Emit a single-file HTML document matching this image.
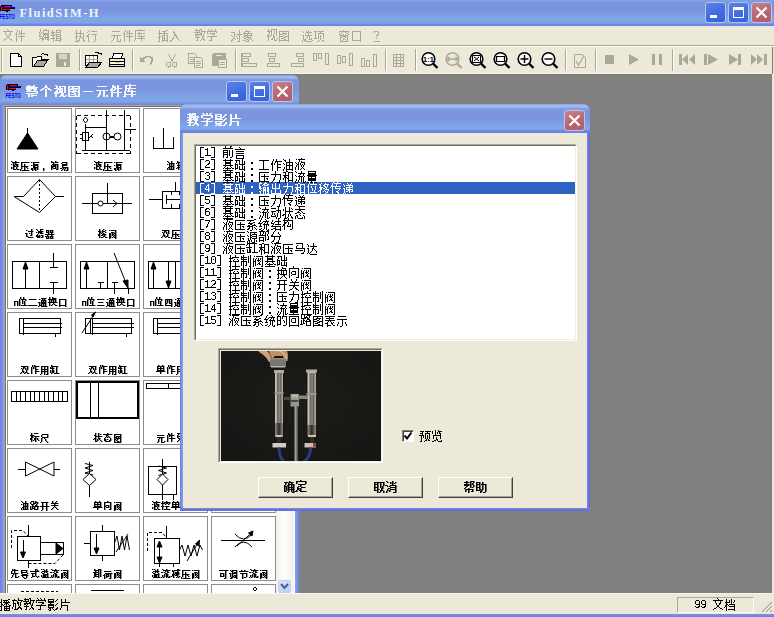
<!DOCTYPE html>
<html><head><meta charset="utf-8">
<style>
*{margin:0;padding:0;box-sizing:border-box}
html,body{width:774px;height:617px;overflow:hidden;background:#808080;font-family:"Liberation Sans",sans-serif;font-size:12px;color:#000}
.a{position:absolute}
svg{position:absolute;left:0;top:0;overflow:visible}
.cap{position:absolute;color:#fff;font-weight:bold;white-space:nowrap}
.menu{position:absolute;color:#aca899;font-size:12px;line-height:12px;white-space:nowrap}
.lbl{position:absolute;font-size:10px;line-height:10px;white-space:nowrap;text-align:center;width:64px}
.li{position:absolute;left:199px;font-size:12px;line-height:12px;white-space:nowrap}
.btn{position:absolute;width:75px;height:21px;background:#ece9d8;border:1px solid;border-color:#fff #404040 #404040 #fff;box-shadow:inset -1px -1px 0 #aca899;text-align:center;font-size:12px;line-height:18px}
</style></head><body>
<svg width="0" height="0" style="position:absolute;left:0;top:0"><defs><path id="r12_6587" d="M5 0h1v1h-1zM6 1h1v1h-1zM1 2h10v1h-10zM3 3h1v1h-1zM8 3h1v1h-1zM3 4h1v1h-1zM8 4h1v1h-1zM4 5h1v1h-1zM7 5h2v1h-2zM4 6h1v1h-1zM7 6h1v1h-1zM5 7h2v1h-2zM5 8h2v1h-2zM4 9h1v1h-1zM7 9h1v1h-1zM2 10h2v1h-2zM8 10h2v1h-2zM1 11h1v1h-1zM10 11h1v1h-1z"/><path id="r12_4ef6" d="M3 1h1v1h-1zM7 1h1v1h-1zM3 2h1v1h-1zM5 2h1v1h-1zM7 2h1v1h-1zM2 3h1v1h-1zM5 3h1v1h-1zM7 3h1v1h-1zM2 4h1v1h-1zM5 4h6v1h-6zM1 5h2v1h-2zM4 5h1v1h-1zM7 5h1v1h-1zM2 6h1v1h-1zM7 6h1v1h-1zM2 7h1v1h-1zM4 7h7v1h-7zM2 8h1v1h-1zM7 8h1v1h-1zM2 9h1v1h-1zM7 9h1v1h-1zM2 10h1v1h-1zM7 10h1v1h-1zM2 11h1v1h-1zM7 11h1v1h-1zM2 12h1v1h-1zM7 12h1v1h-1z"/><path id="r12_7f16" d="M2 0h1v1h-1zM7 0h1v1h-1zM2 1h1v1h-1zM5 1h6v1h-6zM2 2h1v1h-1zM5 2h1v1h-1zM10 2h1v1h-1zM1 3h1v1h-1zM3 3h1v1h-1zM5 3h1v1h-1zM10 3h1v1h-1zM1 4h1v1h-1zM3 4h1v1h-1zM5 4h6v1h-6zM2 5h1v1h-1zM5 5h6v1h-6zM1 6h1v1h-1zM5 6h1v1h-1zM7 6h1v1h-1zM9 6h2v1h-2zM1 7h3v1h-3zM5 7h1v1h-1zM7 7h1v1h-1zM9 7h2v1h-2zM4 8h1v1h-1zM6 8h5v1h-5zM2 9h4v1h-4zM7 9h1v1h-1zM9 9h2v1h-2zM1 10h1v1h-1zM4 10h2v1h-2zM7 10h1v1h-1zM9 10h2v1h-2zM4 11h1v1h-1zM10 11h1v1h-1z"/><path id="r12_8f91" d="M2 1h1v1h-1zM6 1h5v1h-5zM2 2h1v1h-1zM6 2h1v1h-1zM10 2h1v1h-1zM1 3h4v1h-4zM6 3h5v1h-5zM2 4h2v1h-2zM1 5h1v1h-1zM3 5h1v1h-1zM5 5h6v1h-6zM1 6h4v1h-4zM6 6h1v1h-1zM10 6h1v1h-1zM3 7h1v1h-1zM6 7h5v1h-5zM3 8h1v1h-1zM6 8h1v1h-1zM10 8h1v1h-1zM0 9h5v1h-5zM6 9h5v1h-5zM3 10h1v1h-1zM6 10h1v1h-1zM10 10h2v1h-2zM3 11h1v1h-1zM5 11h6v1h-6zM3 12h1v1h-1zM10 12h1v1h-1z"/><path id="r12_6267" d="M2 1h1v1h-1zM6 1h1v1h-1zM2 2h1v1h-1zM6 2h1v1h-1zM2 3h1v1h-1zM6 3h1v1h-1zM1 4h9v1h-9zM2 5h1v1h-1zM6 5h1v1h-1zM9 5h1v1h-1zM2 6h1v1h-1zM6 6h1v1h-1zM9 6h1v1h-1zM2 7h2v1h-2zM5 7h2v1h-2zM9 7h1v1h-1zM1 8h2v1h-2zM6 8h2v1h-2zM9 8h1v1h-1zM2 9h1v1h-1zM5 9h1v1h-1zM8 9h2v1h-2zM2 10h1v1h-1zM5 10h1v1h-1zM9 10h1v1h-1zM2 11h1v1h-1zM4 11h2v1h-2zM9 11h2v1h-2zM1 12h4v1h-4zM10 12h1v1h-1z"/><path id="r12_884c" d="M3 1h1v1h-1zM2 2h1v1h-1zM5 2h6v1h-6zM1 3h1v1h-1zM3 4h1v1h-1zM2 5h1v1h-1zM5 5h6v1h-6zM1 6h2v1h-2zM9 6h1v1h-1zM0 7h3v1h-3zM9 7h1v1h-1zM2 8h1v1h-1zM9 8h1v1h-1zM2 9h1v1h-1zM9 9h1v1h-1zM2 10h1v1h-1zM9 10h1v1h-1zM2 11h1v1h-1zM9 11h1v1h-1zM2 12h1v1h-1zM7 12h2v1h-2z"/><path id="r12_5143" d="M2 2h8v1h-8zM1 6h10v1h-10zM4 7h1v1h-1zM7 7h1v1h-1zM4 8h1v1h-1zM7 8h1v1h-1zM3 9h1v1h-1zM7 9h1v1h-1zM3 10h1v1h-1zM7 10h1v1h-1zM10 10h1v1h-1zM2 11h1v1h-1zM7 11h1v1h-1zM10 11h1v1h-1zM1 12h1v1h-1zM7 12h4v1h-4z"/><path id="r12_5e93" d="M6 0h1v1h-1zM1 1h10v1h-10zM1 2h1v1h-1zM1 3h1v1h-1zM5 3h1v1h-1zM1 4h1v1h-1zM3 4h8v1h-8zM1 5h1v1h-1zM5 5h1v1h-1zM1 6h1v1h-1zM4 6h1v1h-1zM7 6h1v1h-1zM1 7h1v1h-1zM4 7h7v1h-7zM1 8h1v1h-1zM7 8h1v1h-1zM1 9h1v1h-1zM3 9h8v1h-8zM1 10h1v1h-1zM7 10h1v1h-1zM0 11h1v1h-1zM7 11h1v1h-1z"/><path id="r12_63d2" d="M2 1h1v1h-1zM9 1h2v1h-2zM2 2h1v1h-1zM5 2h4v1h-4zM2 3h1v1h-1zM7 3h1v1h-1zM1 4h10v1h-10zM2 5h1v1h-1zM7 5h1v1h-1zM2 6h1v1h-1zM5 6h3v1h-3zM9 6h2v1h-2zM2 7h2v1h-2zM5 7h1v1h-1zM7 7h1v1h-1zM10 7h1v1h-1zM1 8h2v1h-2zM5 8h1v1h-1zM7 8h1v1h-1zM10 8h1v1h-1zM2 9h1v1h-1zM5 9h3v1h-3zM9 9h2v1h-2zM2 10h1v1h-1zM5 10h1v1h-1zM7 10h1v1h-1zM10 10h1v1h-1zM2 11h1v1h-1zM5 11h6v1h-6zM1 12h2v1h-2zM5 12h1v1h-1zM10 12h1v1h-1z"/><path id="r12_5165" d="M4 2h1v1h-1zM4 3h2v1h-2zM5 4h1v1h-1zM5 5h2v1h-2zM5 6h3v1h-3zM5 7h1v1h-1zM7 7h1v1h-1zM4 8h1v1h-1zM7 8h2v1h-2zM3 9h2v1h-2zM8 9h1v1h-1zM3 10h1v1h-1zM9 10h1v1h-1zM1 11h2v1h-2zM10 11h1v1h-1zM1 12h1v1h-1z"/><path id="r12_6559" d="M2 0h1v1h-1zM6 0h2v1h-2zM1 1h5v1h-5zM7 1h1v1h-1zM2 2h1v1h-1zM5 2h1v1h-1zM7 2h5v1h-5zM0 3h6v1h-6zM7 3h1v1h-1zM10 3h1v1h-1zM3 4h1v1h-1zM6 4h2v1h-2zM10 4h1v1h-1zM1 5h7v1h-7zM9 5h1v1h-1zM1 6h2v1h-2zM4 6h1v1h-1zM7 6h1v1h-1zM9 6h1v1h-1zM3 7h1v1h-1zM8 7h2v1h-2zM1 8h5v1h-5zM8 8h1v1h-1zM3 9h1v1h-1zM8 9h2v1h-2zM3 10h1v1h-1zM7 10h1v1h-1zM9 10h2v1h-2zM2 11h2v1h-2zM6 11h1v1h-1zM10 11h1v1h-1z"/><path id="r12_5b66" d="M2 0h1v1h-1zM5 0h1v1h-1zM9 0h1v1h-1zM3 1h1v1h-1zM6 1h1v1h-1zM9 1h1v1h-1zM1 2h10v1h-10zM1 3h1v1h-1zM10 3h1v1h-1zM1 4h1v1h-1zM3 4h6v1h-6zM7 5h2v1h-2zM6 6h1v1h-1zM1 7h10v1h-10zM5 8h1v1h-1zM5 9h1v1h-1zM5 10h1v1h-1zM3 11h3v1h-3z"/><path id="r12_5bf9" d="M9 1h1v1h-1zM9 2h1v1h-1zM1 3h4v1h-4zM9 3h1v1h-1zM4 4h1v1h-1zM9 4h1v1h-1zM4 5h1v1h-1zM6 5h6v1h-6zM1 6h1v1h-1zM4 6h1v1h-1zM9 6h1v1h-1zM2 7h1v1h-1zM4 7h1v1h-1zM6 7h1v1h-1zM9 7h1v1h-1zM3 8h1v1h-1zM7 8h1v1h-1zM9 8h1v1h-1zM3 9h2v1h-2zM7 9h1v1h-1zM9 9h1v1h-1zM2 10h1v1h-1zM5 10h1v1h-1zM9 10h1v1h-1zM1 11h2v1h-2zM9 11h1v1h-1zM1 12h1v1h-1zM7 12h3v1h-3z"/><path id="r12_8c61" d="M4 1h1v1h-1zM3 2h5v1h-5zM2 3h1v1h-1zM6 3h1v1h-1zM1 4h9v1h-9zM2 5h1v1h-1zM5 5h1v1h-1zM9 5h1v1h-1zM2 6h8v1h-8zM2 7h2v1h-2zM5 7h1v1h-1zM9 7h1v1h-1zM1 8h1v1h-1zM4 8h5v1h-5zM2 9h2v1h-2zM6 9h1v1h-1zM8 9h1v1h-1zM4 10h2v1h-2zM7 10h1v1h-1zM9 10h1v1h-1zM1 11h3v1h-3zM6 11h1v1h-1zM10 11h1v1h-1zM4 12h3v1h-3z"/><path id="r12_89c6" d="M2 0h1v1h-1zM5 0h6v1h-6zM2 1h1v1h-1zM5 1h1v1h-1zM10 1h1v1h-1zM1 2h5v1h-5zM8 2h1v1h-1zM10 2h1v1h-1zM3 3h1v1h-1zM5 3h1v1h-1zM8 3h1v1h-1zM10 3h1v1h-1zM3 4h1v1h-1zM5 4h1v1h-1zM8 4h1v1h-1zM10 4h1v1h-1zM2 5h1v1h-1zM5 5h1v1h-1zM7 5h1v1h-1zM10 5h1v1h-1zM1 6h3v1h-3zM5 6h1v1h-1zM7 6h1v1h-1zM10 6h1v1h-1zM1 7h2v1h-2zM4 7h1v1h-1zM7 7h2v1h-2zM2 8h1v1h-1zM7 8h2v1h-2zM2 9h1v1h-1zM6 9h1v1h-1zM8 9h1v1h-1zM11 9h1v1h-1zM2 10h1v1h-1zM5 10h2v1h-2zM8 10h1v1h-1zM10 10h1v1h-1zM2 11h1v1h-1zM8 11h3v1h-3z"/><path id="r12_56fe" d="M1 2h10v1h-10zM1 3h1v1h-1zM5 3h1v1h-1zM10 3h1v1h-1zM1 4h1v1h-1zM4 4h5v1h-5zM10 4h1v1h-1zM1 5h4v1h-4zM7 5h1v1h-1zM10 5h1v1h-1zM1 6h1v1h-1zM5 6h2v1h-2zM10 6h1v1h-1zM1 7h4v1h-4zM7 7h4v1h-4zM1 8h1v1h-1zM5 8h3v1h-3zM10 8h1v1h-1zM1 9h1v1h-1zM3 9h3v1h-3zM10 9h1v1h-1zM1 10h1v1h-1zM6 10h2v1h-2zM10 10h1v1h-1zM1 11h10v1h-10zM1 12h1v1h-1zM10 12h1v1h-1z"/><path id="r12_9009" d="M7 1h1v1h-1zM1 2h1v1h-1zM5 2h1v1h-1zM7 2h1v1h-1zM2 3h1v1h-1zM5 3h6v1h-6zM4 4h1v1h-1zM7 4h1v1h-1zM7 5h1v1h-1zM1 6h2v1h-2zM4 6h7v1h-7zM2 7h1v1h-1zM6 7h1v1h-1zM8 7h1v1h-1zM2 8h1v1h-1zM6 8h1v1h-1zM8 8h1v1h-1zM2 9h1v1h-1zM5 9h1v1h-1zM8 9h1v1h-1zM10 9h1v1h-1zM2 10h3v1h-3zM8 10h3v1h-3zM1 11h1v1h-1zM3 11h2v1h-2zM11 11h1v1h-1zM1 12h1v1h-1zM4 12h7v1h-7z"/><path id="r12_9879" d="M1 2h3v1h-3zM5 2h6v1h-6zM2 3h1v1h-1zM7 3h1v1h-1zM2 4h1v1h-1zM5 4h6v1h-6zM2 5h1v1h-1zM5 5h1v1h-1zM10 5h1v1h-1zM2 6h1v1h-1zM5 6h1v1h-1zM7 6h1v1h-1zM10 6h1v1h-1zM2 7h1v1h-1zM5 7h1v1h-1zM7 7h1v1h-1zM10 7h1v1h-1zM2 8h1v1h-1zM5 8h1v1h-1zM7 8h1v1h-1zM10 8h1v1h-1zM1 9h3v1h-3zM5 9h1v1h-1zM7 9h1v1h-1zM10 9h1v1h-1zM7 10h1v1h-1zM6 11h1v1h-1zM9 11h2v1h-2zM4 12h2v1h-2zM10 12h1v1h-1z"/><path id="r12_7a97" d="M5 1h1v1h-1zM1 2h10v1h-10zM1 3h1v1h-1zM4 3h1v1h-1zM7 3h1v1h-1zM10 3h1v1h-1zM3 4h1v1h-1zM8 4h2v1h-2zM1 5h2v1h-2zM5 5h1v1h-1zM10 5h1v1h-1zM2 6h8v1h-8zM2 7h1v1h-1zM4 7h4v1h-4zM9 7h1v1h-1zM2 8h2v1h-2zM7 8h1v1h-1zM9 8h1v1h-1zM2 9h1v1h-1zM5 9h2v1h-2zM9 9h1v1h-1zM2 10h1v1h-1zM5 10h1v1h-1zM7 10h1v1h-1zM9 10h1v1h-1zM2 11h1v1h-1zM4 11h1v1h-1zM9 11h1v1h-1zM2 12h8v1h-8z"/><path id="r12_53e3" d="M2 2h9v1h-9zM2 3h1v1h-1zM10 3h1v1h-1zM2 4h1v1h-1zM10 4h1v1h-1zM2 5h1v1h-1zM10 5h1v1h-1zM2 6h1v1h-1zM10 6h1v1h-1zM2 7h1v1h-1zM10 7h1v1h-1zM2 8h1v1h-1zM10 8h1v1h-1zM2 9h1v1h-1zM10 9h1v1h-1zM2 10h1v1h-1zM10 10h1v1h-1zM2 11h9v1h-9zM10 12h1v1h-1z"/><path id="r12_3f" d="M1 2h4v1h-4zM1 3h1v1h-1zM5 3h1v1h-1zM5 4h1v1h-1zM4 5h2v1h-2zM3 6h2v1h-2zM3 7h1v1h-1zM3 9h1v1h-1z"/><path id="b13_6574" d="M3 3h2v1h-2zM8 3h2v1h-2zM1 4h9v1h-9zM1 5h12v1h-12zM1 6h11v1h-11zM1 7h6v1h-6zM8 7h4v1h-4zM2 8h4v1h-4zM9 8h2v1h-2zM1 9h12v1h-12zM11 10h2v1h-2zM1 11h12v1h-12zM3 12h2v1h-2zM6 12h2v1h-2zM3 13h2v1h-2zM6 13h6v1h-6zM3 14h2v1h-2zM6 14h2v1h-2z"/><path id="b13_4e2a" d="M6 3h2v1h-2zM6 4h2v1h-2zM5 5h4v1h-4zM3 6h3v1h-3zM8 6h3v1h-3zM2 7h3v1h-3zM6 7h2v1h-2zM9 7h3v1h-3zM1 8h2v1h-2zM6 8h2v1h-2zM11 8h2v1h-2zM6 9h2v1h-2zM6 10h2v1h-2zM6 11h2v1h-2zM6 12h2v1h-2zM6 13h2v1h-2zM6 14h2v1h-2z"/><path id="b13_89c6" d="M2 3h2v1h-2zM3 4h2v1h-2zM6 4h7v1h-7zM3 5h2v1h-2zM6 5h2v1h-2zM11 5h2v1h-2zM1 6h9v1h-9zM11 6h2v1h-2zM4 7h6v1h-6zM11 7h2v1h-2zM3 8h2v1h-2zM6 8h4v1h-4zM11 8h2v1h-2zM2 9h3v1h-3zM6 9h4v1h-4zM11 9h2v1h-2zM1 10h9v1h-9zM11 10h2v1h-2zM1 11h5v1h-5zM8 11h3v1h-3zM2 12h2v1h-2zM8 12h3v1h-3zM2 13h2v1h-2zM7 13h4v1h-4zM12 13h2v1h-2zM2 14h2v1h-2zM6 14h2v1h-2zM9 14h4v1h-4z"/><path id="b13_56fe" d="M1 4h12v1h-12zM1 5h2v1h-2zM5 5h2v1h-2zM11 5h2v1h-2zM1 6h2v1h-2zM4 6h9v1h-9zM1 7h6v1h-6zM8 7h2v1h-2zM11 7h2v1h-2zM1 8h2v1h-2zM6 8h3v1h-3zM11 8h2v1h-2zM1 9h12v1h-12zM1 10h2v1h-2zM5 10h3v1h-3zM11 10h2v1h-2zM1 11h2v1h-2zM7 11h2v1h-2zM11 11h2v1h-2zM1 12h2v1h-2zM4 12h5v1h-5zM11 12h2v1h-2zM1 13h2v1h-2zM8 13h2v1h-2zM11 13h2v1h-2zM1 14h12v1h-12z"/><path id="b13_ff0d" d="M2 9h10v1h-10z"/><path id="b13_5143" d="M2 4h10v1h-10zM1 8h12v1h-12zM4 9h2v1h-2zM8 9h2v1h-2zM4 10h2v1h-2zM8 10h2v1h-2zM4 11h2v1h-2zM8 11h2v1h-2zM3 12h3v1h-3zM8 12h2v1h-2zM3 13h2v1h-2zM8 13h2v1h-2zM11 13h2v1h-2zM2 14h2v1h-2zM8 14h2v1h-2zM11 14h2v1h-2z"/><path id="b13_4ef6" d="M3 3h2v1h-2zM8 3h2v1h-2zM3 4h4v1h-4zM8 4h2v1h-2zM3 5h4v1h-4zM8 5h2v1h-2zM2 6h2v1h-2zM5 6h8v1h-8zM1 7h3v1h-3zM5 7h2v1h-2zM8 7h2v1h-2zM1 8h5v1h-5zM8 8h2v1h-2zM2 9h2v1h-2zM8 9h2v1h-2zM2 10h11v1h-11zM2 11h2v1h-2zM8 11h2v1h-2zM2 12h2v1h-2zM8 12h2v1h-2zM2 13h2v1h-2zM8 13h2v1h-2zM2 14h2v1h-2zM8 14h2v1h-2z"/><path id="b13_5e93" d="M6 2h2v1h-2zM2 3h11v1h-11zM2 4h2v1h-2zM6 4h2v1h-2zM2 5h2v1h-2zM6 5h2v1h-2zM2 6h11v1h-11zM2 7h2v1h-2zM5 7h2v1h-2zM2 8h2v1h-2zM5 8h2v1h-2zM8 8h2v1h-2zM1 9h2v1h-2zM4 9h9v1h-9zM1 10h2v1h-2zM8 10h2v1h-2zM1 11h2v1h-2zM8 11h2v1h-2zM1 12h12v1h-12zM1 13h2v1h-2zM8 13h2v1h-2zM0 14h3v1h-3zM8 14h2v1h-2z"/><path id="s9_6db2" d="M1 1h1v1h-1zM5 1h1v1h-1zM2 2h7v1h-7zM3 3h1v1h-1zM5 3h1v1h-1zM1 4h1v1h-1zM3 4h1v1h-1zM5 4h3v1h-3zM3 5h2v1h-2zM6 5h2v1h-2zM3 6h3v1h-3zM7 6h1v1h-1zM1 7h1v1h-1zM3 7h1v1h-1zM6 7h1v1h-1zM1 8h1v1h-1zM3 8h1v1h-1zM6 8h1v1h-1zM3 9h3v1h-3zM7 9h2v1h-2z"/><path id="s9_538b" d="M1 2h8v1h-8zM1 3h1v1h-1zM1 4h1v1h-1zM4 4h1v1h-1zM1 5h1v1h-1zM4 5h1v1h-1zM1 6h7v1h-7zM1 7h1v1h-1zM4 7h1v1h-1zM6 7h1v1h-1zM1 8h1v1h-1zM4 8h1v1h-1zM7 8h1v1h-1zM0 9h1v1h-1zM4 9h1v1h-1zM0 10h1v1h-1zM2 10h7v1h-7z"/><path id="s9_6e90" d="M1 2h1v1h-1zM3 2h6v1h-6zM3 3h1v1h-1zM3 4h5v1h-5zM1 5h1v1h-1zM3 5h5v1h-5zM3 6h2v1h-2zM7 6h1v1h-1zM3 7h5v1h-5zM1 8h2v1h-2zM4 8h2v1h-2zM7 8h1v1h-1zM1 9h2v1h-2zM4 9h2v1h-2zM7 9h1v1h-1zM2 10h1v1h-1zM5 10h1v1h-1z"/><path id="s9_ff0c" d="M3 8h1v1h-1zM3 9h1v1h-1zM3 10h1v1h-1z"/><path id="s9_7b80" d="M1 1h1v1h-1zM5 1h1v1h-1zM1 2h3v1h-3zM5 2h3v1h-3zM3 3h1v1h-1zM2 4h6v1h-6zM1 5h1v1h-1zM3 5h3v1h-3zM7 5h1v1h-1zM1 6h5v1h-5zM7 6h1v1h-1zM1 7h2v1h-2zM5 7h1v1h-1zM7 7h1v1h-1zM1 8h1v1h-1zM3 8h3v1h-3zM7 8h1v1h-1zM1 9h1v1h-1zM6 9h2v1h-2z"/><path id="s9_6613" d="M2 2h5v1h-5zM1 3h1v1h-1zM6 3h1v1h-1zM2 4h5v1h-5zM2 5h5v1h-5zM2 6h1v1h-1zM2 7h6v1h-6zM0 8h2v1h-2zM3 8h1v1h-1zM5 8h1v1h-1zM7 8h1v1h-1zM2 9h1v1h-1zM4 9h1v1h-1zM7 9h1v1h-1zM1 10h1v1h-1zM4 10h1v1h-1zM6 10h2v1h-2z"/><path id="s9_6cb9" d="M1 1h1v1h-1zM5 1h1v1h-1zM2 2h1v1h-1zM5 2h1v1h-1zM3 3h5v1h-5zM1 4h1v1h-1zM3 4h1v1h-1zM5 4h1v1h-1zM7 4h1v1h-1zM3 5h1v1h-1zM5 5h1v1h-1zM7 5h1v1h-1zM3 6h5v1h-5zM2 7h2v1h-2zM5 7h1v1h-1zM7 7h1v1h-1zM1 8h1v1h-1zM3 8h1v1h-1zM5 8h1v1h-1zM7 8h1v1h-1zM1 9h1v1h-1zM3 9h5v1h-5z"/><path id="s9_7bb1" d="M1 1h1v1h-1zM5 1h1v1h-1zM1 2h3v1h-3zM5 2h4v1h-4zM0 3h1v1h-1zM2 3h1v1h-1zM4 3h1v1h-1zM6 3h1v1h-1zM2 4h1v1h-1zM4 4h4v1h-4zM1 5h4v1h-4zM7 5h1v1h-1zM2 6h1v1h-1zM4 6h4v1h-4zM1 7h7v1h-7zM0 8h1v1h-1zM2 8h1v1h-1zM4 8h1v1h-1zM7 8h1v1h-1zM2 9h1v1h-1zM4 9h4v1h-4z"/><path id="s9_8fc7" d="M6 1h1v1h-1zM1 2h1v1h-1zM6 2h1v1h-1zM3 3h5v1h-5zM6 4h1v1h-1zM0 5h2v1h-2zM4 5h1v1h-1zM6 5h1v1h-1zM1 6h1v1h-1zM6 6h1v1h-1zM1 7h1v1h-1zM5 7h2v1h-2zM1 8h2v1h-2zM3 9h5v1h-5z"/><path id="s9_6ee4" d="M1 1h1v1h-1zM5 1h3v1h-3zM2 2h1v1h-1zM5 2h1v1h-1zM3 3h5v1h-5zM1 4h1v1h-1zM3 4h4v1h-4zM3 5h1v1h-1zM5 5h3v1h-3zM2 6h1v1h-1zM1 7h2v1h-2zM4 7h1v1h-1zM6 7h2v1h-2zM1 8h4v1h-4zM7 8h1v1h-1zM2 9h3v1h-3zM6 9h2v1h-2z"/><path id="s9_5668" d="M1 2h3v1h-3zM5 2h3v1h-3zM1 3h1v1h-1zM3 3h1v1h-1zM5 3h1v1h-1zM7 3h1v1h-1zM1 4h3v1h-3zM5 4h3v1h-3zM3 5h1v1h-1zM6 5h1v1h-1zM0 6h9v1h-9zM2 7h1v1h-1zM6 7h1v1h-1zM0 8h4v1h-4zM5 8h3v1h-3zM1 9h1v1h-1zM3 9h1v1h-1zM5 9h1v1h-1zM7 9h1v1h-1zM1 10h3v1h-3zM5 10h3v1h-3z"/><path id="s9_68ad" d="M1 1h1v1h-1zM5 1h1v1h-1zM1 2h1v1h-1zM4 2h1v1h-1zM7 2h1v1h-1zM0 3h3v1h-3zM4 3h3v1h-3zM1 4h2v1h-2zM4 4h1v1h-1zM7 4h1v1h-1zM1 5h1v1h-1zM3 5h1v1h-1zM5 5h1v1h-1zM0 6h2v1h-2zM4 6h4v1h-4zM0 7h2v1h-2zM3 7h2v1h-2zM6 7h1v1h-1zM1 8h1v1h-1zM5 8h2v1h-2zM1 9h1v1h-1zM3 9h2v1h-2zM7 9h2v1h-2z"/><path id="s9_9600" d="M1 2h1v1h-1zM3 2h5v1h-5zM7 3h1v1h-1zM3 4h3v1h-3zM7 4h1v1h-1zM1 5h2v1h-2zM4 5h1v1h-1zM6 5h2v1h-2zM1 6h2v1h-2zM4 6h2v1h-2zM7 6h1v1h-1zM1 7h2v1h-2zM4 7h1v1h-1zM6 7h2v1h-2zM1 8h2v1h-2zM5 8h1v1h-1zM7 8h1v1h-1zM1 9h2v1h-2zM4 9h1v1h-1zM6 9h2v1h-2zM1 10h1v1h-1zM7 10h1v1h-1z"/><path id="s9_53cc" d="M1 2h7v1h-7zM3 3h2v1h-2zM7 3h1v1h-1zM1 4h1v1h-1zM3 4h1v1h-1zM5 4h1v1h-1zM7 4h1v1h-1zM2 5h1v1h-1zM5 5h1v1h-1zM7 5h1v1h-1zM2 6h1v1h-1zM6 6h1v1h-1zM2 7h2v1h-2zM6 7h1v1h-1zM1 8h1v1h-1zM3 8h1v1h-1zM5 8h2v1h-2zM0 9h1v1h-1zM4 9h1v1h-1zM7 9h2v1h-2z"/><path id="s9_6e" d="M1 5h4v1h-4zM1 6h1v1h-1zM4 6h1v1h-1zM1 7h1v1h-1zM4 7h1v1h-1zM1 8h1v1h-1zM4 8h1v1h-1zM1 9h1v1h-1zM4 9h1v1h-1z"/><path id="s9_4f4d" d="M2 1h1v1h-1zM5 1h1v1h-1zM2 2h1v1h-1zM5 2h1v1h-1zM1 3h1v1h-1zM3 3h5v1h-5zM1 4h1v1h-1zM4 4h1v1h-1zM7 4h1v1h-1zM1 5h1v1h-1zM4 5h1v1h-1zM6 5h1v1h-1zM1 6h1v1h-1zM4 6h1v1h-1zM6 6h1v1h-1zM1 7h1v1h-1zM4 7h1v1h-1zM6 7h1v1h-1zM1 8h1v1h-1zM6 8h1v1h-1zM1 9h1v1h-1zM3 9h6v1h-6z"/><path id="s9_4e8c" d="M1 3h7v1h-7zM0 9h9v1h-9z"/><path id="s9_901a" d="M3 2h5v1h-5zM1 3h1v1h-1zM4 3h1v1h-1zM6 3h1v1h-1zM3 4h5v1h-5zM3 5h1v1h-1zM5 5h1v1h-1zM7 5h1v1h-1zM0 6h2v1h-2zM3 6h5v1h-5zM1 7h1v1h-1zM3 7h5v1h-5zM1 8h1v1h-1zM3 8h1v1h-1zM5 8h1v1h-1zM7 8h1v1h-1zM1 9h3v1h-3zM5 9h1v1h-1zM7 9h1v1h-1zM0 10h1v1h-1zM3 10h6v1h-6z"/><path id="s9_6362" d="M1 1h1v1h-1zM4 1h1v1h-1zM1 2h1v1h-1zM4 2h4v1h-4zM0 3h8v1h-8zM1 4h1v1h-1zM3 4h1v1h-1zM5 4h1v1h-1zM7 4h1v1h-1zM1 5h1v1h-1zM3 5h1v1h-1zM5 5h1v1h-1zM7 5h1v1h-1zM0 6h9v1h-9zM1 7h1v1h-1zM5 7h1v1h-1zM1 8h1v1h-1zM4 8h1v1h-1zM6 8h1v1h-1zM1 9h1v1h-1zM3 9h1v1h-1zM7 9h2v1h-2z"/><path id="s9_53e3" d="M1 3h7v1h-7zM1 4h1v1h-1zM7 4h1v1h-1zM1 5h1v1h-1zM7 5h1v1h-1zM1 6h1v1h-1zM7 6h1v1h-1zM1 7h1v1h-1zM7 7h1v1h-1zM1 8h1v1h-1zM7 8h1v1h-1zM1 9h7v1h-7zM1 10h1v1h-1zM7 10h1v1h-1z"/><path id="s9_4e09" d="M1 3h7v1h-7zM2 6h5v1h-5zM1 9h7v1h-7z"/><path id="s9_56db" d="M1 3h7v1h-7zM1 4h1v1h-1zM3 4h1v1h-1zM5 4h1v1h-1zM7 4h1v1h-1zM1 5h1v1h-1zM3 5h1v1h-1zM5 5h1v1h-1zM7 5h1v1h-1zM1 6h1v1h-1zM3 6h1v1h-1zM5 6h1v1h-1zM7 6h1v1h-1zM1 7h2v1h-2zM5 7h3v1h-3zM1 8h1v1h-1zM7 8h1v1h-1zM1 9h7v1h-7zM7 10h1v1h-1z"/><path id="s9_4f5c" d="M2 1h1v1h-1zM4 1h1v1h-1zM2 2h1v1h-1zM4 2h5v1h-5zM1 3h1v1h-1zM3 3h1v1h-1zM5 3h1v1h-1zM1 4h1v1h-1zM3 4h1v1h-1zM5 4h1v1h-1zM1 5h1v1h-1zM5 5h3v1h-3zM1 6h1v1h-1zM5 6h1v1h-1zM1 7h1v1h-1zM5 7h4v1h-4zM1 8h1v1h-1zM5 8h1v1h-1zM1 9h1v1h-1zM5 9h1v1h-1z"/><path id="s9_7528" d="M1 2h7v1h-7zM1 3h1v1h-1zM4 3h1v1h-1zM7 3h1v1h-1zM1 4h1v1h-1zM4 4h1v1h-1zM7 4h1v1h-1zM1 5h7v1h-7zM1 6h1v1h-1zM4 6h1v1h-1zM7 6h1v1h-1zM1 7h7v1h-7zM1 8h1v1h-1zM4 8h1v1h-1zM7 8h1v1h-1zM1 9h1v1h-1zM4 9h1v1h-1zM7 9h1v1h-1zM0 10h1v1h-1zM4 10h1v1h-1zM6 10h2v1h-2z"/><path id="s9_7f38" d="M1 1h1v1h-1zM1 2h7v1h-7zM0 3h1v1h-1zM2 3h1v1h-1zM6 3h1v1h-1zM0 4h4v1h-4zM6 4h1v1h-1zM2 5h1v1h-1zM6 5h1v1h-1zM0 6h1v1h-1zM2 6h2v1h-2zM6 6h1v1h-1zM0 7h1v1h-1zM2 7h2v1h-2zM6 7h1v1h-1zM0 8h1v1h-1zM2 8h2v1h-2zM6 8h1v1h-1zM1 9h1v1h-1zM4 9h5v1h-5z"/><path id="s9_5355" d="M2 1h1v1h-1zM6 1h1v1h-1zM1 2h7v1h-7zM1 3h1v1h-1zM4 3h1v1h-1zM7 3h1v1h-1zM1 4h7v1h-7zM1 5h1v1h-1zM4 5h1v1h-1zM7 5h1v1h-1zM1 6h7v1h-7zM0 7h9v1h-9zM4 8h1v1h-1zM4 9h1v1h-1z"/><path id="s9_6807" d="M1 1h1v1h-1zM4 1h4v1h-4zM1 2h1v1h-1zM0 3h4v1h-4zM1 4h2v1h-2zM4 4h5v1h-5zM1 5h2v1h-2zM5 5h1v1h-1zM0 6h2v1h-2zM4 6h2v1h-2zM7 6h1v1h-1zM0 7h2v1h-2zM4 7h2v1h-2zM7 7h1v1h-1zM1 8h1v1h-1zM3 8h1v1h-1zM5 8h1v1h-1zM8 8h1v1h-1zM1 9h1v1h-1zM5 9h1v1h-1z"/><path id="s9_5c3a" d="M2 2h6v1h-6zM1 3h1v1h-1zM7 3h1v1h-1zM1 4h1v1h-1zM7 4h1v1h-1zM2 5h6v1h-6zM1 6h1v1h-1zM4 6h1v1h-1zM1 7h1v1h-1zM5 7h1v1h-1zM1 8h1v1h-1zM5 8h1v1h-1zM1 9h1v1h-1zM6 9h1v1h-1zM0 10h1v1h-1zM7 10h1v1h-1z"/><path id="s9_72b6" d="M2 1h1v1h-1zM5 1h1v1h-1zM2 2h1v1h-1zM5 2h1v1h-1zM7 2h1v1h-1zM1 3h2v1h-2zM5 3h1v1h-1zM2 4h7v1h-7zM2 5h1v1h-1zM5 5h1v1h-1zM1 6h2v1h-2zM5 6h2v1h-2zM0 7h1v1h-1zM2 7h1v1h-1zM4 7h1v1h-1zM6 7h1v1h-1zM2 8h1v1h-1zM4 8h1v1h-1zM7 8h1v1h-1zM2 9h2v1h-2zM8 9h1v1h-1z"/><path id="s9_6001" d="M4 1h1v1h-1zM0 2h9v1h-9zM3 3h2v1h-2zM3 4h1v1h-1zM5 4h1v1h-1zM2 5h1v1h-1zM4 5h1v1h-1zM6 5h1v1h-1zM1 6h1v1h-1zM7 6h1v1h-1zM1 7h2v1h-2zM4 7h1v1h-1zM7 7h1v1h-1zM1 8h2v1h-2zM6 8h2v1h-2zM2 9h5v1h-5z"/><path id="s9_56fe" d="M1 2h7v1h-7zM1 3h1v1h-1zM7 3h1v1h-1zM1 4h1v1h-1zM3 4h5v1h-5zM1 5h3v1h-3zM5 5h1v1h-1zM7 5h1v1h-1zM1 6h1v1h-1zM3 6h5v1h-5zM1 7h2v1h-2zM4 7h1v1h-1zM7 7h1v1h-1zM1 8h1v1h-1zM3 8h1v1h-1zM7 8h1v1h-1zM1 9h1v1h-1zM4 9h2v1h-2zM7 9h1v1h-1zM1 10h7v1h-7z"/><path id="s9_5143" d="M1 3h7v1h-7zM1 5h7v1h-7zM3 6h1v1h-1zM5 6h1v1h-1zM2 7h1v1h-1zM5 7h1v1h-1zM2 8h1v1h-1zM5 8h1v1h-1zM2 9h1v1h-1zM5 9h1v1h-1zM8 9h1v1h-1zM1 10h1v1h-1zM5 10h3v1h-3z"/><path id="s9_4ef6" d="M2 1h1v1h-1zM5 1h1v1h-1zM2 2h2v1h-2zM5 2h1v1h-1zM1 3h1v1h-1zM3 3h5v1h-5zM1 4h1v1h-1zM3 4h1v1h-1zM5 4h1v1h-1zM1 5h1v1h-1zM5 5h1v1h-1zM1 6h1v1h-1zM3 6h6v1h-6zM1 7h1v1h-1zM5 7h1v1h-1zM1 8h1v1h-1zM5 8h1v1h-1zM1 9h1v1h-1zM5 9h1v1h-1z"/><path id="s9_5217" d="M1 1h4v1h-4zM7 1h1v1h-1zM2 2h1v1h-1zM5 2h1v1h-1zM7 2h1v1h-1zM1 3h1v1h-1zM5 3h1v1h-1zM7 3h1v1h-1zM1 4h5v1h-5zM7 4h1v1h-1zM1 5h1v1h-1zM4 5h2v1h-2zM7 5h1v1h-1zM2 6h2v1h-2zM5 6h1v1h-1zM7 6h1v1h-1zM3 7h1v1h-1zM7 7h1v1h-1zM2 8h1v1h-1zM7 8h1v1h-1zM1 9h1v1h-1zM6 9h2v1h-2z"/><path id="s9_8868" d="M4 1h1v1h-1zM1 2h7v1h-7zM1 3h7v1h-7zM4 4h1v1h-1zM1 5h7v1h-7zM2 6h2v1h-2zM5 6h1v1h-1zM7 6h1v1h-1zM0 7h3v1h-3zM5 7h2v1h-2zM2 8h1v1h-1zM6 8h1v1h-1zM2 9h3v1h-3zM7 9h1v1h-1z"/><path id="s9_8def" d="M1 1h3v1h-3zM5 1h1v1h-1zM0 2h1v1h-1zM3 2h1v1h-1zM5 2h3v1h-3zM0 3h1v1h-1zM3 3h3v1h-3zM7 3h1v1h-1zM1 4h3v1h-3zM6 4h1v1h-1zM2 5h1v1h-1zM5 5h2v1h-2zM0 6h1v1h-1zM2 6h7v1h-7zM0 7h1v1h-1zM2 7h1v1h-1zM4 7h1v1h-1zM7 7h1v1h-1zM0 8h1v1h-1zM2 8h3v1h-3zM7 8h1v1h-1zM0 9h2v1h-2zM4 9h4v1h-4z"/><path id="s9_5f00" d="M1 2h7v1h-7zM2 3h1v1h-1zM6 3h1v1h-1zM2 4h1v1h-1zM6 4h1v1h-1zM2 5h1v1h-1zM6 5h1v1h-1zM0 6h9v1h-9zM2 7h1v1h-1zM6 7h1v1h-1zM2 8h1v1h-1zM6 8h1v1h-1zM2 9h1v1h-1zM6 9h1v1h-1zM1 10h1v1h-1zM6 10h1v1h-1z"/><path id="s9_5173" d="M2 1h1v1h-1zM6 1h1v1h-1zM2 2h1v1h-1zM5 2h1v1h-1zM1 3h7v1h-7zM4 4h1v1h-1zM1 5h7v1h-7zM4 6h1v1h-1zM3 7h1v1h-1zM5 7h1v1h-1zM2 8h1v1h-1zM6 8h1v1h-1zM1 9h1v1h-1zM7 9h1v1h-1z"/><path id="s9_5411" d="M4 1h1v1h-1zM1 2h7v1h-7zM1 3h1v1h-1zM7 3h1v1h-1zM1 4h1v1h-1zM7 4h1v1h-1zM1 5h1v1h-1zM3 5h3v1h-3zM7 5h1v1h-1zM1 6h2v1h-2zM5 6h1v1h-1zM7 6h1v1h-1zM1 7h1v1h-1zM3 7h3v1h-3zM7 7h1v1h-1zM1 8h1v1h-1zM7 8h1v1h-1zM1 9h1v1h-1zM6 9h2v1h-2z"/><path id="s9_63a7" d="M1 1h1v1h-1zM5 1h1v1h-1zM1 2h1v1h-1zM3 2h6v1h-6zM0 3h4v1h-4zM5 3h2v1h-2zM8 3h1v1h-1zM1 4h1v1h-1zM4 4h1v1h-1zM7 4h1v1h-1zM1 5h1v1h-1zM0 6h3v1h-3zM4 6h4v1h-4zM1 7h1v1h-1zM5 7h1v1h-1zM1 8h1v1h-1zM5 8h1v1h-1zM1 9h1v1h-1zM3 9h6v1h-6z"/><path id="s9_5148" d="M2 1h1v1h-1zM4 1h1v1h-1zM2 2h6v1h-6zM1 3h1v1h-1zM4 3h1v1h-1zM1 4h1v1h-1zM4 4h1v1h-1zM1 5h7v1h-7zM3 6h1v1h-1zM5 6h1v1h-1zM2 7h1v1h-1zM5 7h1v1h-1zM2 8h1v1h-1zM5 8h1v1h-1zM8 8h1v1h-1zM1 9h1v1h-1zM5 9h3v1h-3z"/><path id="s9_5bfc" d="M1 2h6v1h-6zM1 3h1v1h-1zM6 3h1v1h-1zM1 4h6v1h-6zM1 5h1v1h-1zM7 5h1v1h-1zM2 6h5v1h-5zM1 7h7v1h-7zM2 8h1v1h-1zM6 8h1v1h-1zM3 9h1v1h-1zM6 9h1v1h-1zM4 10h2v1h-2z"/><path id="s9_5f0f" d="M5 1h2v1h-2zM5 2h1v1h-1zM7 2h1v1h-1zM0 3h9v1h-9zM5 4h1v1h-1zM1 5h5v1h-5zM2 6h1v1h-1zM5 6h1v1h-1zM2 7h1v1h-1zM5 7h1v1h-1zM2 8h3v1h-3zM6 8h1v1h-1zM8 8h1v1h-1zM1 9h1v1h-1zM7 9h1v1h-1z"/><path id="s9_6ea2" d="M1 1h1v1h-1zM3 1h1v1h-1zM6 1h1v1h-1zM4 2h1v1h-1zM6 2h1v1h-1zM2 3h6v1h-6zM1 4h1v1h-1zM4 4h1v1h-1zM6 4h1v1h-1zM2 5h2v1h-2zM7 5h1v1h-1zM3 6h5v1h-5zM1 7h1v1h-1zM3 7h3v1h-3zM7 7h1v1h-1zM1 8h1v1h-1zM3 8h3v1h-3zM7 8h1v1h-1zM2 9h7v1h-7z"/><path id="s9_6d41" d="M1 1h1v1h-1zM5 1h1v1h-1zM2 2h7v1h-7zM4 3h1v1h-1zM6 3h1v1h-1zM0 4h2v1h-2zM3 4h1v1h-1zM6 4h2v1h-2zM4 5h2v1h-2zM3 6h1v1h-1zM5 6h2v1h-2zM1 7h1v1h-1zM3 7h1v1h-1zM5 7h2v1h-2zM1 8h1v1h-1zM3 8h1v1h-1zM5 8h2v1h-2zM8 8h1v1h-1zM0 9h1v1h-1zM2 9h1v1h-1zM5 9h1v1h-1zM7 9h2v1h-2z"/><path id="s9_5378" d="M1 1h1v1h-1zM5 1h3v1h-3zM1 2h5v1h-5zM7 2h1v1h-1zM2 3h1v1h-1zM5 3h1v1h-1zM7 3h1v1h-1zM0 4h6v1h-6zM7 4h1v1h-1zM1 5h2v1h-2zM5 5h1v1h-1zM7 5h1v1h-1zM1 6h5v1h-5zM7 6h1v1h-1zM1 7h2v1h-2zM5 7h1v1h-1zM7 7h1v1h-1zM1 8h5v1h-5zM7 8h1v1h-1zM0 9h1v1h-1zM5 9h1v1h-1z"/><path id="s9_8377" d="M1 3h7v1h-7zM2 5h7v1h-7zM1 6h1v1h-1zM3 6h3v1h-3zM7 6h1v1h-1zM0 7h2v1h-2zM3 7h1v1h-1zM5 7h1v1h-1zM7 7h1v1h-1zM1 8h1v1h-1zM3 8h3v1h-3zM7 8h1v1h-1zM1 9h1v1h-1zM3 9h1v1h-1zM7 9h1v1h-1zM1 10h1v1h-1zM6 10h2v1h-2z"/><path id="s9_51cf" d="M6 1h2v1h-2zM1 2h1v1h-1zM3 2h6v1h-6zM1 3h2v1h-2zM6 3h1v1h-1zM2 4h1v1h-1zM4 4h4v1h-4zM2 5h1v1h-1zM4 5h4v1h-4zM1 6h3v1h-3zM5 6h3v1h-3zM1 7h2v1h-2zM4 7h3v1h-3zM0 8h1v1h-1zM2 8h1v1h-1zM6 8h1v1h-1zM8 8h1v1h-1zM2 9h1v1h-1zM5 9h1v1h-1zM7 9h1v1h-1z"/><path id="s9_53ef" d="M0 2h9v1h-9zM6 3h1v1h-1zM6 4h1v1h-1zM1 5h4v1h-4zM6 5h1v1h-1zM1 6h1v1h-1zM4 6h1v1h-1zM6 6h1v1h-1zM1 7h1v1h-1zM4 7h1v1h-1zM6 7h1v1h-1zM1 8h4v1h-4zM6 8h1v1h-1zM6 9h1v1h-1zM5 10h2v1h-2z"/><path id="s9_8c03" d="M1 2h1v1h-1zM3 2h5v1h-5zM2 3h2v1h-2zM7 3h1v1h-1zM3 4h1v1h-1zM5 4h3v1h-3zM0 5h2v1h-2zM3 5h5v1h-5zM1 6h1v1h-1zM3 6h1v1h-1zM7 6h1v1h-1zM1 7h1v1h-1zM3 7h1v1h-1zM5 7h3v1h-3zM1 8h1v1h-1zM3 8h2v1h-2zM6 8h2v1h-2zM2 9h2v1h-2zM5 9h3v1h-3zM1 10h2v1h-2zM7 10h1v1h-1z"/><path id="s9_8282" d="M2 2h1v1h-1zM5 2h1v1h-1zM0 3h9v1h-9zM1 5h7v1h-7zM3 6h1v1h-1zM7 6h1v1h-1zM3 7h1v1h-1zM7 7h1v1h-1zM3 8h1v1h-1zM7 8h1v1h-1zM3 9h1v1h-1zM5 9h2v1h-2zM3 10h1v1h-1z"/><path id="b13_6559" d="M3 2h2v1h-2zM6 2h4v1h-4zM1 3h9v1h-9zM3 4h4v1h-4zM8 4h2v1h-2zM3 5h10v1h-10zM1 6h9v1h-9zM11 6h2v1h-2zM3 7h3v1h-3zM7 7h5v1h-5zM2 8h10v1h-10zM1 9h5v1h-5zM8 9h4v1h-4zM3 10h2v1h-2zM9 10h2v1h-2zM1 11h7v1h-7zM9 11h2v1h-2zM3 12h2v1h-2zM8 12h4v1h-4zM3 13h2v1h-2zM7 13h2v1h-2zM10 13h3v1h-3zM2 14h3v1h-3zM6 14h2v1h-2zM11 14h2v1h-2z"/><path id="b13_5b66" d="M2 2h2v1h-2zM6 2h2v1h-2zM10 2h2v1h-2zM3 3h2v1h-2zM6 3h2v1h-2zM9 3h2v1h-2zM1 4h12v1h-12zM1 5h2v1h-2zM11 5h2v1h-2zM1 6h2v1h-2zM11 6h2v1h-2zM3 7h8v1h-8zM7 8h3v1h-3zM6 9h2v1h-2zM1 10h12v1h-12zM6 11h2v1h-2zM6 12h2v1h-2zM6 13h2v1h-2zM4 14h4v1h-4z"/><path id="b13_5f71" d="M1 3h7v1h-7zM11 3h2v1h-2zM1 4h2v1h-2zM6 4h2v1h-2zM10 4h2v1h-2zM1 5h7v1h-7zM9 5h2v1h-2zM1 6h2v1h-2zM6 6h4v1h-4zM1 7h7v1h-7zM11 7h2v1h-2zM1 8h8v1h-8zM10 8h2v1h-2zM9 9h2v1h-2zM1 10h9v1h-9zM1 11h2v1h-2zM6 11h2v1h-2zM11 11h2v1h-2zM1 12h7v1h-7zM11 12h2v1h-2zM2 13h5v1h-5zM10 13h2v1h-2zM1 14h2v1h-2zM4 14h7v1h-7z"/><path id="b13_7247" d="M2 3h2v1h-2zM7 3h2v1h-2zM2 4h2v1h-2zM7 4h2v1h-2zM2 5h2v1h-2zM7 5h2v1h-2zM2 6h2v1h-2zM7 6h2v1h-2zM2 7h11v1h-11zM2 8h2v1h-2zM2 9h2v1h-2zM2 10h9v1h-9zM2 11h2v1h-2zM9 11h2v1h-2zM2 12h2v1h-2zM9 12h2v1h-2zM1 13h3v1h-3zM9 13h2v1h-2zM1 14h2v1h-2zM9 14h2v1h-2z"/><path id="r12_5b" d="M2 1h4v1h-4zM2 2h1v1h-1zM2 3h1v1h-1zM2 4h1v1h-1zM2 5h1v1h-1zM2 6h1v1h-1zM2 7h1v1h-1zM2 8h1v1h-1zM2 9h1v1h-1zM2 10h1v1h-1zM2 11h4v1h-4z"/><path id="r12_31" d="M3 2h1v1h-1zM1 3h3v1h-3zM3 4h1v1h-1zM3 5h1v1h-1zM3 6h1v1h-1zM3 7h1v1h-1zM3 8h1v1h-1zM1 9h6v1h-6z"/><path id="r12_5d" d="M1 1h4v1h-4zM4 2h1v1h-1zM4 3h1v1h-1zM4 4h1v1h-1zM4 5h1v1h-1zM4 6h1v1h-1zM4 7h1v1h-1zM4 8h1v1h-1zM4 9h1v1h-1zM4 10h1v1h-1zM1 11h4v1h-4z"/><path id="r12_524d" d="M3 0h1v1h-1zM8 0h2v1h-2zM3 1h1v1h-1zM8 1h1v1h-1zM1 2h10v1h-10zM1 4h5v1h-5zM7 4h1v1h-1zM10 4h1v1h-1zM1 5h1v1h-1zM5 5h1v1h-1zM7 5h1v1h-1zM10 5h1v1h-1zM1 6h5v1h-5zM7 6h1v1h-1zM10 6h1v1h-1zM1 7h1v1h-1zM5 7h1v1h-1zM7 7h1v1h-1zM10 7h1v1h-1zM1 8h5v1h-5zM7 8h1v1h-1zM10 8h1v1h-1zM1 9h1v1h-1zM5 9h1v1h-1zM7 9h1v1h-1zM10 9h1v1h-1zM1 10h1v1h-1zM5 10h1v1h-1zM10 10h1v1h-1zM1 11h1v1h-1zM4 11h2v1h-2zM8 11h2v1h-2z"/><path id="r12_8a00" d="M5 1h1v1h-1zM6 2h1v1h-1zM1 3h10v1h-10zM2 5h8v1h-8zM2 7h8v1h-8zM2 9h8v1h-8zM2 10h1v1h-1zM9 10h1v1h-1zM2 11h1v1h-1zM9 11h1v1h-1zM2 12h8v1h-8z"/><path id="r12_32" d="M2 2h3v1h-3zM1 3h1v1h-1zM5 3h1v1h-1zM5 4h1v1h-1zM4 5h2v1h-2zM3 6h2v1h-2zM2 7h1v1h-1zM1 8h1v1h-1zM1 9h5v1h-5z"/><path id="r12_57fa" d="M3 1h1v1h-1zM8 1h1v1h-1zM1 2h10v1h-10zM3 3h1v1h-1zM8 3h1v1h-1zM3 4h6v1h-6zM3 5h6v1h-6zM3 6h1v1h-1zM8 6h1v1h-1zM1 7h10v1h-10zM3 8h1v1h-1zM8 8h1v1h-1zM2 9h1v1h-1zM5 9h1v1h-1zM9 9h1v1h-1zM1 10h1v1h-1zM3 10h6v1h-6zM10 10h2v1h-2zM5 11h1v1h-1zM1 12h10v1h-10z"/><path id="r12_7840" d="M8 1h1v1h-1zM1 2h5v1h-5zM8 2h1v1h-1zM2 3h1v1h-1zM5 3h1v1h-1zM8 3h1v1h-1zM10 3h1v1h-1zM2 4h1v1h-1zM5 4h1v1h-1zM8 4h1v1h-1zM10 4h1v1h-1zM1 5h1v1h-1zM5 5h1v1h-1zM8 5h1v1h-1zM10 5h1v1h-1zM1 6h3v1h-3zM5 6h6v1h-6zM1 7h1v1h-1zM3 7h1v1h-1zM8 7h1v1h-1zM1 8h1v1h-1zM3 8h1v1h-1zM5 8h1v1h-1zM8 8h1v1h-1zM10 8h1v1h-1zM1 9h1v1h-1zM3 9h1v1h-1zM5 9h1v1h-1zM8 9h1v1h-1zM10 9h1v1h-1zM1 10h3v1h-3zM5 10h1v1h-1zM8 10h1v1h-1zM10 10h1v1h-1zM1 11h1v1h-1zM5 11h6v1h-6zM10 12h1v1h-1z"/><path id="r12_ff1a" d="M5 4h2v1h-2zM5 5h2v1h-2zM5 10h2v1h-2zM5 11h2v1h-2z"/><path id="r12_5de5" d="M1 2h10v1h-10zM5 3h1v1h-1zM5 4h1v1h-1zM5 5h1v1h-1zM5 6h1v1h-1zM5 7h1v1h-1zM5 8h1v1h-1zM5 9h1v1h-1zM5 10h1v1h-1zM1 11h10v1h-10z"/><path id="r12_4f5c" d="M3 1h1v1h-1zM6 1h1v1h-1zM3 2h1v1h-1zM6 2h1v1h-1zM2 3h1v1h-1zM5 3h7v1h-7zM2 4h1v1h-1zM5 4h1v1h-1zM7 4h1v1h-1zM1 5h2v1h-2zM4 5h1v1h-1zM7 5h1v1h-1zM1 6h2v1h-2zM4 6h1v1h-1zM7 6h4v1h-4zM2 7h1v1h-1zM7 7h1v1h-1zM2 8h1v1h-1zM7 8h1v1h-1zM2 9h1v1h-1zM7 9h4v1h-4zM2 10h1v1h-1zM7 10h1v1h-1zM2 11h1v1h-1zM7 11h1v1h-1zM2 12h1v1h-1zM7 12h1v1h-1z"/><path id="r12_6cb9" d="M1 1h1v1h-1zM7 1h1v1h-1zM2 2h2v1h-2zM7 2h1v1h-1zM3 3h1v1h-1zM7 3h1v1h-1zM4 4h7v1h-7zM1 5h1v1h-1zM4 5h1v1h-1zM7 5h1v1h-1zM10 5h1v1h-1zM2 6h1v1h-1zM4 6h1v1h-1zM7 6h1v1h-1zM10 6h1v1h-1zM4 7h7v1h-7zM4 8h1v1h-1zM7 8h1v1h-1zM10 8h1v1h-1zM2 9h1v1h-1zM4 9h1v1h-1zM7 9h1v1h-1zM10 9h1v1h-1zM2 10h1v1h-1zM4 10h1v1h-1zM7 10h1v1h-1zM10 10h1v1h-1zM1 11h1v1h-1zM4 11h7v1h-7zM1 12h1v1h-1zM4 12h1v1h-1zM10 12h1v1h-1z"/><path id="r12_6db2" d="M7 0h1v1h-1zM2 1h1v1h-1zM4 1h7v1h-7zM5 2h1v1h-1zM5 3h1v1h-1zM7 3h1v1h-1zM1 4h1v1h-1zM4 4h1v1h-1zM7 4h4v1h-4zM2 5h1v1h-1zM4 5h1v1h-1zM6 5h1v1h-1zM10 5h1v1h-1zM3 6h2v1h-2zM6 6h1v1h-1zM8 6h1v1h-1zM10 6h1v1h-1zM2 7h1v1h-1zM4 7h1v1h-1zM7 7h1v1h-1zM9 7h1v1h-1zM2 8h1v1h-1zM4 8h1v1h-1zM7 8h1v1h-1zM9 8h1v1h-1zM1 9h1v1h-1zM4 9h1v1h-1zM8 9h1v1h-1zM1 10h1v1h-1zM4 10h1v1h-1zM7 10h1v1h-1zM9 10h1v1h-1zM1 11h1v1h-1zM4 11h1v1h-1zM6 11h1v1h-1zM10 11h1v1h-1z"/><path id="r12_33" d="M2 2h3v1h-3zM1 3h1v1h-1zM5 3h1v1h-1zM5 4h1v1h-1zM3 5h2v1h-2zM5 6h1v1h-1zM5 7h1v1h-1zM1 8h1v1h-1zM5 8h1v1h-1zM2 9h3v1h-3z"/><path id="r12_538b" d="M1 2h10v1h-10zM1 3h1v1h-1zM1 4h1v1h-1zM6 4h1v1h-1zM1 5h1v1h-1zM6 5h1v1h-1zM1 6h1v1h-1zM3 6h8v1h-8zM1 7h1v1h-1zM6 7h1v1h-1zM1 8h1v1h-1zM6 8h1v1h-1zM8 8h2v1h-2zM1 9h1v1h-1zM6 9h1v1h-1zM9 9h1v1h-1zM1 10h1v1h-1zM6 10h1v1h-1zM1 11h10v1h-10z"/><path id="r12_529b" d="M5 1h1v1h-1zM5 2h1v1h-1zM5 3h1v1h-1zM1 4h10v1h-10zM5 5h1v1h-1zM10 5h1v1h-1zM5 6h1v1h-1zM10 6h1v1h-1zM4 7h1v1h-1zM10 7h1v1h-1zM4 8h1v1h-1zM10 8h1v1h-1zM3 9h2v1h-2zM10 9h1v1h-1zM3 10h1v1h-1zM9 10h1v1h-1zM2 11h1v1h-1zM9 11h1v1h-1zM1 12h1v1h-1zM7 12h3v1h-3z"/><path id="r12_548c" d="M4 1h2v1h-2zM1 2h3v1h-3zM6 2h5v1h-5zM3 3h1v1h-1zM6 3h1v1h-1zM10 3h1v1h-1zM3 4h1v1h-1zM6 4h1v1h-1zM10 4h1v1h-1zM1 5h6v1h-6zM10 5h1v1h-1zM2 6h2v1h-2zM6 6h1v1h-1zM10 6h1v1h-1zM2 7h3v1h-3zM6 7h1v1h-1zM10 7h1v1h-1zM1 8h1v1h-1zM3 8h1v1h-1zM5 8h2v1h-2zM10 8h1v1h-1zM1 9h1v1h-1zM3 9h1v1h-1zM6 9h1v1h-1zM10 9h1v1h-1zM3 10h1v1h-1zM6 10h5v1h-5zM3 11h1v1h-1zM6 11h1v1h-1zM10 11h1v1h-1zM3 12h1v1h-1z"/><path id="r12_6d41" d="M1 1h1v1h-1zM7 1h1v1h-1zM2 2h1v1h-1zM7 2h1v1h-1zM4 3h7v1h-7zM6 4h1v1h-1zM9 4h1v1h-1zM1 5h1v1h-1zM5 5h1v1h-1zM9 5h1v1h-1zM2 6h1v1h-1zM4 6h5v1h-5zM10 6h1v1h-1zM5 7h1v1h-1zM7 7h1v1h-1zM9 7h1v1h-1zM5 8h1v1h-1zM7 8h1v1h-1zM9 8h1v1h-1zM2 9h1v1h-1zM5 9h1v1h-1zM7 9h1v1h-1zM9 9h1v1h-1zM2 10h1v1h-1zM4 10h1v1h-1zM7 10h1v1h-1zM9 10h1v1h-1zM1 11h1v1h-1zM4 11h1v1h-1zM7 11h1v1h-1zM9 11h1v1h-1zM11 11h1v1h-1zM1 12h1v1h-1zM3 12h1v1h-1zM9 12h2v1h-2z"/><path id="r12_91cf" d="M2 1h8v1h-8zM2 2h1v1h-1zM9 2h1v1h-1zM2 3h8v1h-8zM2 4h8v1h-8zM1 5h10v1h-10zM2 6h8v1h-8zM2 7h1v1h-1zM5 7h1v1h-1zM9 7h1v1h-1zM2 8h8v1h-8zM2 9h8v1h-8zM2 10h8v1h-8zM5 11h1v1h-1zM1 12h10v1h-10z"/><path id="r12_34" d="M4 2h1v1h-1zM3 3h2v1h-2zM2 4h1v1h-1zM4 4h1v1h-1zM2 5h1v1h-1zM4 5h1v1h-1zM1 6h1v1h-1zM4 6h1v1h-1zM1 7h5v1h-5zM4 8h1v1h-1zM4 9h1v1h-1z"/><path id="r12_8f93" d="M2 0h1v1h-1zM7 0h1v1h-1zM1 1h3v1h-3zM6 1h3v1h-3zM1 2h1v1h-1zM5 2h2v1h-2zM9 2h2v1h-2zM1 3h1v1h-1zM4 3h1v1h-1zM6 3h4v1h-4zM1 4h2v1h-2zM1 5h2v1h-2zM5 5h3v1h-3zM9 5h2v1h-2zM1 6h3v1h-3zM5 6h1v1h-1zM7 6h1v1h-1zM9 6h2v1h-2zM2 7h1v1h-1zM5 7h3v1h-3zM9 7h2v1h-2zM3 8h1v1h-1zM5 8h3v1h-3zM9 8h2v1h-2zM1 9h2v1h-2zM5 9h1v1h-1zM7 9h1v1h-1zM9 9h2v1h-2zM2 10h1v1h-1zM5 10h1v1h-1zM7 10h1v1h-1zM10 10h1v1h-1zM2 11h1v1h-1zM5 11h1v1h-1zM7 11h1v1h-1zM9 11h2v1h-2z"/><path id="r12_51fa" d="M5 1h1v1h-1zM2 2h1v1h-1zM5 2h1v1h-1zM9 2h1v1h-1zM2 3h1v1h-1zM5 3h1v1h-1zM9 3h1v1h-1zM2 4h1v1h-1zM5 4h1v1h-1zM9 4h1v1h-1zM2 5h1v1h-1zM5 5h1v1h-1zM9 5h1v1h-1zM2 6h8v1h-8zM5 7h1v1h-1zM1 8h1v1h-1zM5 8h1v1h-1zM10 8h1v1h-1zM1 9h1v1h-1zM5 9h1v1h-1zM10 9h1v1h-1zM1 10h1v1h-1zM5 10h1v1h-1zM10 10h1v1h-1zM1 11h10v1h-10zM10 12h1v1h-1z"/><path id="r12_4f4d" d="M3 0h1v1h-1zM7 0h1v1h-1zM3 1h1v1h-1zM7 1h1v1h-1zM2 2h1v1h-1zM4 2h7v1h-7zM2 3h1v1h-1zM1 4h2v1h-2zM5 4h1v1h-1zM9 4h1v1h-1zM2 5h1v1h-1zM5 5h1v1h-1zM9 5h1v1h-1zM2 6h1v1h-1zM6 6h1v1h-1zM9 6h1v1h-1zM2 7h1v1h-1zM6 7h1v1h-1zM9 7h1v1h-1zM2 8h1v1h-1zM6 8h1v1h-1zM8 8h1v1h-1zM2 9h1v1h-1zM8 9h1v1h-1zM2 10h1v1h-1zM4 10h7v1h-7zM2 11h1v1h-1z"/><path id="r12_79fb" d="M3 1h1v1h-1zM7 1h1v1h-1zM1 2h2v1h-2zM6 2h5v1h-5zM2 3h1v1h-1zM5 3h2v1h-2zM9 3h1v1h-1zM2 4h1v1h-1zM6 4h2v1h-2zM9 4h1v1h-1zM1 5h4v1h-4zM7 5h2v1h-2zM2 6h2v1h-2zM5 6h2v1h-2zM8 6h1v1h-1zM2 7h2v1h-2zM7 7h4v1h-4zM1 8h2v1h-2zM6 8h1v1h-1zM10 8h1v1h-1zM0 9h1v1h-1zM2 9h1v1h-1zM5 9h1v1h-1zM7 9h1v1h-1zM9 9h1v1h-1zM2 10h1v1h-1zM8 10h2v1h-2zM2 11h1v1h-1zM7 11h1v1h-1zM2 12h1v1h-1zM5 12h2v1h-2z"/><path id="r12_4f20" d="M3 0h1v1h-1zM7 0h1v1h-1zM2 1h1v1h-1zM4 1h7v1h-7zM2 2h1v1h-1zM6 2h1v1h-1zM1 3h2v1h-2zM6 3h1v1h-1zM1 4h10v1h-10zM0 5h1v1h-1zM2 5h1v1h-1zM5 5h1v1h-1zM2 6h1v1h-1zM5 6h6v1h-6zM2 7h1v1h-1zM9 7h1v1h-1zM2 8h1v1h-1zM8 8h1v1h-1zM2 9h1v1h-1zM6 9h2v1h-2zM2 10h1v1h-1zM7 10h2v1h-2zM2 11h1v1h-1zM8 11h1v1h-1z"/><path id="r12_9012" d="M5 1h1v1h-1zM9 1h1v1h-1zM1 2h1v1h-1zM6 2h1v1h-1zM8 2h1v1h-1zM2 3h1v1h-1zM4 3h7v1h-7zM2 4h1v1h-1zM7 4h1v1h-1zM10 4h1v1h-1zM4 5h7v1h-7zM1 6h2v1h-2zM4 6h1v1h-1zM7 6h1v1h-1zM2 7h1v1h-1zM4 7h7v1h-7zM2 8h1v1h-1zM6 8h2v1h-2zM10 8h1v1h-1zM2 9h1v1h-1zM4 9h2v1h-2zM7 9h1v1h-1zM9 9h2v1h-2zM2 10h1v1h-1zM7 10h1v1h-1zM1 11h1v1h-1zM3 11h1v1h-1zM4 12h7v1h-7z"/><path id="r12_35" d="M1 2h5v1h-5zM1 3h1v1h-1zM1 4h1v1h-1zM1 5h4v1h-4zM5 6h1v1h-1zM5 7h1v1h-1zM1 8h1v1h-1zM5 8h1v1h-1zM2 9h3v1h-3z"/><path id="r12_36" d="M2 2h3v1h-3zM1 3h2v1h-2zM5 3h1v1h-1zM1 4h1v1h-1zM1 5h4v1h-4zM1 6h1v1h-1zM5 6h1v1h-1zM1 7h1v1h-1zM5 7h1v1h-1zM1 8h1v1h-1zM5 8h1v1h-1zM2 9h3v1h-3z"/><path id="r12_52a8" d="M8 1h1v1h-1zM1 2h5v1h-5zM8 2h1v1h-1zM8 3h1v1h-1zM6 4h5v1h-5zM1 5h5v1h-5zM8 5h1v1h-1zM10 5h1v1h-1zM2 6h1v1h-1zM8 6h1v1h-1zM10 6h1v1h-1zM2 7h1v1h-1zM4 7h1v1h-1zM7 7h1v1h-1zM10 7h1v1h-1zM2 8h1v1h-1zM4 8h1v1h-1zM7 8h1v1h-1zM10 8h1v1h-1zM1 9h1v1h-1zM5 9h1v1h-1zM7 9h1v1h-1zM10 9h1v1h-1zM1 10h5v1h-5zM7 10h1v1h-1zM10 10h1v1h-1zM6 11h1v1h-1zM10 11h1v1h-1zM6 12h1v1h-1zM8 12h2v1h-2z"/><path id="r12_72b6" d="M3 1h1v1h-1zM7 1h1v1h-1zM3 2h1v1h-1zM7 2h1v1h-1zM9 2h1v1h-1zM1 3h1v1h-1zM3 3h1v1h-1zM7 3h1v1h-1zM10 3h1v1h-1zM1 4h1v1h-1zM3 4h1v1h-1zM7 4h1v1h-1zM3 5h8v1h-8zM3 6h1v1h-1zM7 6h1v1h-1zM3 7h1v1h-1zM7 7h1v1h-1zM1 8h3v1h-3zM6 8h1v1h-1zM8 8h1v1h-1zM0 9h2v1h-2zM3 9h1v1h-1zM6 9h1v1h-1zM8 9h1v1h-1zM3 10h1v1h-1zM6 10h1v1h-1zM9 10h1v1h-1zM3 11h1v1h-1zM5 11h1v1h-1zM9 11h2v1h-2zM3 12h2v1h-2zM10 12h1v1h-1z"/><path id="r12_6001" d="M5 1h1v1h-1zM5 2h1v1h-1zM1 3h10v1h-10zM5 4h2v1h-2zM4 5h1v1h-1zM7 5h1v1h-1zM3 6h3v1h-3zM8 6h1v1h-1zM1 7h2v1h-2zM6 7h1v1h-1zM9 7h2v1h-2zM5 8h1v1h-1zM2 9h2v1h-2zM6 9h1v1h-1zM9 9h1v1h-1zM1 10h1v1h-1zM3 10h1v1h-1zM10 10h1v1h-1zM1 11h1v1h-1zM3 11h1v1h-1zM8 11h1v1h-1zM10 11h1v1h-1zM1 12h1v1h-1zM4 12h5v1h-5zM10 12h1v1h-1z"/><path id="r12_37" d="M1 2h5v1h-5zM5 3h1v1h-1zM4 4h1v1h-1zM4 5h1v1h-1zM3 6h1v1h-1zM3 7h1v1h-1zM2 8h2v1h-2zM2 9h1v1h-1z"/><path id="r12_7cfb" d="M8 1h2v1h-2zM1 2h7v1h-7zM4 3h1v1h-1zM3 4h1v1h-1zM7 4h2v1h-2zM2 5h5v1h-5zM4 6h2v1h-2zM8 6h1v1h-1zM2 7h2v1h-2zM6 7h4v1h-4zM1 8h6v1h-6zM10 8h1v1h-1zM3 9h1v1h-1zM6 9h1v1h-1zM8 9h1v1h-1zM2 10h2v1h-2zM6 10h1v1h-1zM9 10h1v1h-1zM1 11h2v1h-2zM6 11h1v1h-1zM10 11h1v1h-1zM4 12h2v1h-2z"/><path id="r12_7edf" d="M3 1h1v1h-1zM7 1h1v1h-1zM2 2h1v1h-1zM8 2h1v1h-1zM2 3h1v1h-1zM5 3h6v1h-6zM1 4h1v1h-1zM4 4h1v1h-1zM7 4h1v1h-1zM9 4h1v1h-1zM0 5h4v1h-4zM6 5h1v1h-1zM9 5h1v1h-1zM2 6h1v1h-1zM5 6h6v1h-6zM2 7h1v1h-1zM6 7h1v1h-1zM8 7h1v1h-1zM10 7h1v1h-1zM1 8h3v1h-3zM6 8h1v1h-1zM8 8h1v1h-1zM6 9h1v1h-1zM8 9h1v1h-1zM3 10h1v1h-1zM6 10h1v1h-1zM8 10h1v1h-1zM1 11h2v1h-2zM5 11h1v1h-1zM8 11h1v1h-1zM10 11h1v1h-1zM4 12h1v1h-1zM9 12h2v1h-2z"/><path id="r12_7ed3" d="M8 1h1v1h-1zM2 2h1v1h-1zM8 2h1v1h-1zM2 3h1v1h-1zM5 3h6v1h-6zM1 4h1v1h-1zM4 4h1v1h-1zM8 4h1v1h-1zM1 5h3v1h-3zM8 5h1v1h-1zM3 6h1v1h-1zM5 6h6v1h-6zM2 7h1v1h-1zM1 8h10v1h-10zM5 9h1v1h-1zM10 9h1v1h-1zM3 10h3v1h-3zM10 10h1v1h-1zM1 11h2v1h-2zM5 11h6v1h-6zM5 12h1v1h-1zM10 12h1v1h-1z"/><path id="r12_6784" d="M2 0h1v1h-1zM6 0h1v1h-1zM2 1h1v1h-1zM6 1h1v1h-1zM1 2h10v1h-10zM2 3h1v1h-1zM5 3h1v1h-1zM10 3h1v1h-1zM2 4h3v1h-3zM6 4h1v1h-1zM10 4h1v1h-1zM2 5h2v1h-2zM6 5h1v1h-1zM10 5h1v1h-1zM1 6h2v1h-2zM6 6h1v1h-1zM8 6h1v1h-1zM10 6h1v1h-1zM1 7h2v1h-2zM5 7h1v1h-1zM8 7h1v1h-1zM10 7h1v1h-1zM0 8h1v1h-1zM2 8h1v1h-1zM5 8h4v1h-4zM10 8h1v1h-1zM2 9h1v1h-1zM10 9h1v1h-1zM2 10h1v1h-1zM10 10h1v1h-1zM2 11h1v1h-1zM8 11h2v1h-2z"/><path id="r12_38" d="M2 2h3v1h-3zM1 3h1v1h-1zM5 3h1v1h-1zM1 4h1v1h-1zM5 4h1v1h-1zM2 5h3v1h-3zM1 6h1v1h-1zM5 6h1v1h-1zM1 7h1v1h-1zM5 7h1v1h-1zM1 8h1v1h-1zM5 8h1v1h-1zM2 9h3v1h-3z"/><path id="r12_6e90" d="M1 1h1v1h-1zM2 2h1v1h-1zM4 2h7v1h-7zM4 3h1v1h-1zM8 3h1v1h-1zM4 4h1v1h-1zM6 4h5v1h-5zM1 5h1v1h-1zM4 5h2v1h-2zM10 5h1v1h-1zM2 6h1v1h-1zM4 6h1v1h-1zM6 6h5v1h-5zM4 7h2v1h-2zM10 7h1v1h-1zM2 8h1v1h-1zM4 8h1v1h-1zM6 8h5v1h-5zM2 9h1v1h-1zM4 9h1v1h-1zM8 9h1v1h-1zM2 10h2v1h-2zM5 10h1v1h-1zM8 10h1v1h-1zM10 10h1v1h-1zM1 11h1v1h-1zM3 11h1v1h-1zM5 11h1v1h-1zM8 11h1v1h-1zM10 11h1v1h-1zM1 12h1v1h-1zM3 12h1v1h-1zM6 12h3v1h-3z"/><path id="r12_90e8" d="M3 0h1v1h-1zM1 1h6v1h-6zM8 1h3v1h-3zM2 2h1v1h-1zM5 2h1v1h-1zM7 2h1v1h-1zM10 2h1v1h-1zM2 3h1v1h-1zM5 3h1v1h-1zM7 3h1v1h-1zM10 3h1v1h-1zM2 4h1v1h-1zM4 4h1v1h-1zM7 4h1v1h-1zM9 4h1v1h-1zM1 5h7v1h-7zM9 5h1v1h-1zM7 6h1v1h-1zM10 6h1v1h-1zM1 7h5v1h-5zM7 7h1v1h-1zM10 7h1v1h-1zM1 8h1v1h-1zM5 8h1v1h-1zM7 8h1v1h-1zM10 8h1v1h-1zM1 9h1v1h-1zM5 9h1v1h-1zM7 9h1v1h-1zM9 9h2v1h-2zM1 10h5v1h-5zM7 10h1v1h-1zM1 11h1v1h-1zM5 11h1v1h-1z"/><path id="r12_5206" d="M4 1h1v1h-1zM3 2h1v1h-1zM8 2h1v1h-1zM3 3h1v1h-1zM8 3h1v1h-1zM2 4h1v1h-1zM9 4h1v1h-1zM1 5h2v1h-2zM10 5h1v1h-1zM1 6h10v1h-10zM4 7h1v1h-1zM9 7h1v1h-1zM4 8h1v1h-1zM9 8h1v1h-1zM4 9h1v1h-1zM9 9h1v1h-1zM3 10h1v1h-1zM8 10h1v1h-1zM2 11h2v1h-2zM8 11h1v1h-1zM1 12h1v1h-1zM6 12h3v1h-3z"/><path id="r12_39" d="M2 2h3v1h-3zM1 3h1v1h-1zM5 3h1v1h-1zM1 4h1v1h-1zM5 4h1v1h-1zM1 5h1v1h-1zM5 5h1v1h-1zM2 6h4v1h-4zM5 7h1v1h-1zM1 8h1v1h-1zM4 8h2v1h-2zM2 9h3v1h-3z"/><path id="r12_7f38" d="M1 0h1v1h-1zM1 1h10v1h-10zM1 2h1v1h-1zM3 2h1v1h-1zM8 2h1v1h-1zM0 3h1v1h-1zM3 3h1v1h-1zM8 3h1v1h-1zM3 4h1v1h-1zM8 4h1v1h-1zM0 5h6v1h-6zM8 5h1v1h-1zM3 6h1v1h-1zM8 6h1v1h-1zM1 7h1v1h-1zM3 7h2v1h-2zM8 7h1v1h-1zM1 8h1v1h-1zM3 8h2v1h-2zM8 8h1v1h-1zM1 9h1v1h-1zM3 9h2v1h-2zM8 9h1v1h-1zM1 10h4v1h-4zM6 10h6v1h-6z"/><path id="r12_9a6c" d="M2 1h7v1h-7zM8 2h1v1h-1zM3 3h1v1h-1zM8 3h1v1h-1zM2 4h1v1h-1zM8 4h1v1h-1zM2 5h1v1h-1zM8 5h1v1h-1zM2 6h9v1h-9zM10 7h1v1h-1zM1 8h8v1h-8zM10 8h1v1h-1zM10 9h1v1h-1zM9 10h1v1h-1zM7 11h3v1h-3z"/><path id="r12_8fbe" d="M7 1h1v1h-1zM1 2h1v1h-1zM7 2h1v1h-1zM2 3h1v1h-1zM7 3h1v1h-1zM2 4h1v1h-1zM4 4h7v1h-7zM7 5h1v1h-1zM1 6h2v1h-2zM6 6h2v1h-2zM2 7h1v1h-1zM6 7h1v1h-1zM8 7h1v1h-1zM2 8h1v1h-1zM6 8h1v1h-1zM9 8h1v1h-1zM2 9h1v1h-1zM5 9h1v1h-1zM10 9h1v1h-1zM2 10h1v1h-1zM4 10h1v1h-1zM10 10h1v1h-1zM1 11h1v1h-1zM3 11h1v1h-1zM4 12h7v1h-7z"/><path id="r12_30" d="M2 2h3v1h-3zM1 3h1v1h-1zM5 3h1v1h-1zM1 4h1v1h-1zM5 4h1v1h-1zM1 5h1v1h-1zM3 5h1v1h-1zM5 5h1v1h-1zM1 6h1v1h-1zM5 6h1v1h-1zM1 7h1v1h-1zM5 7h1v1h-1zM1 8h1v1h-1zM5 8h1v1h-1zM2 9h3v1h-3z"/><path id="r12_63a7" d="M2 1h1v1h-1zM7 1h1v1h-1zM2 2h1v1h-1zM7 2h1v1h-1zM2 3h1v1h-1zM4 3h7v1h-7zM1 4h4v1h-4zM2 5h1v1h-1zM6 5h1v1h-1zM9 5h1v1h-1zM2 6h1v1h-1zM5 6h1v1h-1zM10 6h1v1h-1zM1 7h3v1h-3zM5 7h6v1h-6zM2 8h1v1h-1zM7 8h1v1h-1zM2 9h1v1h-1zM7 9h1v1h-1zM2 10h1v1h-1zM7 10h1v1h-1zM2 11h1v1h-1zM7 11h1v1h-1zM1 12h2v1h-2zM4 12h8v1h-8z"/><path id="r12_5236" d="M3 1h1v1h-1zM10 1h1v1h-1zM1 2h1v1h-1zM3 2h1v1h-1zM8 2h1v1h-1zM10 2h1v1h-1zM1 3h6v1h-6zM8 3h1v1h-1zM10 3h1v1h-1zM1 4h1v1h-1zM3 4h1v1h-1zM8 4h1v1h-1zM10 4h1v1h-1zM1 5h6v1h-6zM8 5h1v1h-1zM10 5h1v1h-1zM3 6h1v1h-1zM8 6h1v1h-1zM10 6h1v1h-1zM1 7h6v1h-6zM8 7h1v1h-1zM10 7h1v1h-1zM1 8h1v1h-1zM3 8h1v1h-1zM6 8h1v1h-1zM8 8h1v1h-1zM10 8h1v1h-1zM1 9h1v1h-1zM3 9h1v1h-1zM6 9h1v1h-1zM10 9h1v1h-1zM1 10h1v1h-1zM3 10h1v1h-1zM6 10h1v1h-1zM10 10h1v1h-1zM1 11h1v1h-1zM3 11h1v1h-1zM5 11h2v1h-2zM10 11h1v1h-1zM3 12h1v1h-1zM9 12h2v1h-2z"/><path id="r12_9600" d="M2 2h1v1h-1zM4 2h7v1h-7zM10 3h1v1h-1zM1 4h1v1h-1zM4 4h1v1h-1zM6 4h1v1h-1zM8 4h1v1h-1zM10 4h1v1h-1zM1 5h1v1h-1zM3 5h1v1h-1zM6 5h1v1h-1zM8 5h1v1h-1zM10 5h1v1h-1zM1 6h1v1h-1zM3 6h1v1h-1zM5 6h3v1h-3zM10 6h1v1h-1zM1 7h3v1h-3zM6 7h1v1h-1zM8 7h1v1h-1zM10 7h1v1h-1zM1 8h1v1h-1zM3 8h1v1h-1zM7 8h1v1h-1zM10 8h1v1h-1zM1 9h1v1h-1zM3 9h1v1h-1zM6 9h2v1h-2zM10 9h1v1h-1zM1 10h1v1h-1zM3 10h1v1h-1zM5 10h1v1h-1zM7 10h2v1h-2zM10 10h1v1h-1zM1 11h1v1h-1zM3 11h1v1h-1zM10 11h1v1h-1zM1 12h1v1h-1zM9 12h2v1h-2z"/><path id="r12_6362" d="M2 1h1v1h-1zM6 1h1v1h-1zM2 2h1v1h-1zM6 2h4v1h-4zM2 3h1v1h-1zM5 3h1v1h-1zM9 3h1v1h-1zM1 4h10v1h-10zM2 5h1v1h-1zM5 5h1v1h-1zM7 5h1v1h-1zM10 5h1v1h-1zM2 6h1v1h-1zM5 6h1v1h-1zM7 6h1v1h-1zM10 6h1v1h-1zM2 7h2v1h-2zM5 7h1v1h-1zM7 7h1v1h-1zM10 7h1v1h-1zM1 8h2v1h-2zM4 8h7v1h-7zM2 9h1v1h-1zM7 9h2v1h-2zM2 10h1v1h-1zM6 10h1v1h-1zM8 10h1v1h-1zM2 11h1v1h-1zM5 11h1v1h-1zM9 11h1v1h-1zM1 12h2v1h-2zM4 12h1v1h-1zM10 12h1v1h-1z"/><path id="r12_5411" d="M5 0h1v1h-1zM5 1h1v1h-1zM1 2h10v1h-10zM1 3h1v1h-1zM10 3h1v1h-1zM1 4h1v1h-1zM10 4h1v1h-1zM1 5h1v1h-1zM4 5h4v1h-4zM10 5h1v1h-1zM1 6h1v1h-1zM3 6h1v1h-1zM7 6h1v1h-1zM10 6h1v1h-1zM1 7h1v1h-1zM3 7h1v1h-1zM7 7h1v1h-1zM10 7h1v1h-1zM1 8h1v1h-1zM4 8h4v1h-4zM10 8h1v1h-1zM1 9h1v1h-1zM3 9h1v1h-1zM10 9h1v1h-1zM1 10h1v1h-1zM10 10h1v1h-1zM1 11h1v1h-1zM8 11h3v1h-3z"/><path id="r12_5f00" d="M1 2h10v1h-10zM3 3h1v1h-1zM8 3h1v1h-1zM3 4h1v1h-1zM8 4h1v1h-1zM3 5h1v1h-1zM8 5h1v1h-1zM1 6h10v1h-10zM3 7h1v1h-1zM8 7h1v1h-1zM3 8h1v1h-1zM8 8h1v1h-1zM3 9h1v1h-1zM8 9h1v1h-1zM2 10h2v1h-2zM8 10h1v1h-1zM2 11h1v1h-1zM8 11h1v1h-1zM1 12h1v1h-1zM8 12h1v1h-1z"/><path id="r12_5173" d="M3 1h1v1h-1zM8 1h1v1h-1zM3 2h1v1h-1zM8 2h1v1h-1zM4 3h1v1h-1zM7 3h1v1h-1zM2 4h9v1h-9zM6 5h1v1h-1zM6 6h1v1h-1zM1 7h10v1h-10zM5 8h2v1h-2zM5 9h1v1h-1zM7 9h1v1h-1zM4 10h1v1h-1zM7 10h2v1h-2zM2 11h2v1h-2zM8 11h2v1h-2zM1 12h1v1h-1zM10 12h1v1h-1z"/><path id="r12_7684" d="M3 0h1v1h-1zM7 0h1v1h-1zM2 1h1v1h-1zM7 1h1v1h-1zM1 2h4v1h-4zM6 2h5v1h-5zM1 3h1v1h-1zM4 3h1v1h-1zM6 3h1v1h-1zM10 3h1v1h-1zM1 4h1v1h-1zM4 4h1v1h-1zM6 4h1v1h-1zM10 4h1v1h-1zM1 5h1v1h-1zM4 5h1v1h-1zM10 5h1v1h-1zM1 6h4v1h-4zM7 6h1v1h-1zM10 6h1v1h-1zM1 7h1v1h-1zM4 7h1v1h-1zM8 7h1v1h-1zM10 7h1v1h-1zM1 8h1v1h-1zM4 8h1v1h-1zM8 8h1v1h-1zM10 8h1v1h-1zM1 9h1v1h-1zM4 9h1v1h-1zM10 9h1v1h-1zM1 10h4v1h-4zM10 10h1v1h-1zM1 11h1v1h-1zM7 11h3v1h-3z"/><path id="r12_56de" d="M1 2h10v1h-10zM1 3h1v1h-1zM10 3h1v1h-1zM1 4h1v1h-1zM4 4h4v1h-4zM10 4h1v1h-1zM1 5h1v1h-1zM3 5h1v1h-1zM7 5h1v1h-1zM10 5h1v1h-1zM1 6h1v1h-1zM3 6h1v1h-1zM7 6h1v1h-1zM10 6h1v1h-1zM1 7h1v1h-1zM3 7h1v1h-1zM7 7h1v1h-1zM10 7h1v1h-1zM1 8h1v1h-1zM4 8h4v1h-4zM10 8h1v1h-1zM1 9h1v1h-1zM10 9h1v1h-1zM1 10h1v1h-1zM10 10h1v1h-1zM1 11h10v1h-10zM1 12h1v1h-1zM10 12h1v1h-1z"/><path id="r12_8def" d="M1 0h4v1h-4zM7 0h1v1h-1zM1 1h1v1h-1zM4 1h1v1h-1zM7 1h4v1h-4zM1 2h1v1h-1zM4 2h1v1h-1zM6 2h1v1h-1zM9 2h1v1h-1zM1 3h1v1h-1zM4 3h4v1h-4zM9 3h1v1h-1zM1 4h5v1h-5zM7 4h2v1h-2zM3 5h1v1h-1zM7 5h3v1h-3zM1 6h1v1h-1zM3 6h2v1h-2zM6 6h1v1h-1zM9 6h2v1h-2zM1 7h1v1h-1zM3 7h1v1h-1zM5 7h6v1h-6zM1 8h1v1h-1zM3 8h1v1h-1zM6 8h1v1h-1zM10 8h1v1h-1zM1 9h1v1h-1zM3 9h2v1h-2zM6 9h1v1h-1zM10 9h1v1h-1zM0 10h3v1h-3zM6 10h1v1h-1zM10 10h1v1h-1zM6 11h5v1h-5z"/><path id="r12_8868" d="M1 2h10v1h-10zM5 3h1v1h-1zM2 4h8v1h-8zM5 5h1v1h-1zM1 6h10v1h-10zM4 7h1v1h-1zM6 7h1v1h-1zM3 8h1v1h-1zM7 8h1v1h-1zM9 8h1v1h-1zM1 9h3v1h-3zM7 9h2v1h-2zM3 10h1v1h-1zM8 10h1v1h-1zM3 11h4v1h-4zM9 11h2v1h-2zM3 12h1v1h-1z"/><path id="r12_793a" d="M2 2h8v1h-8zM1 5h10v1h-10zM6 6h1v1h-1zM6 7h1v1h-1zM2 8h1v1h-1zM6 8h1v1h-1zM9 8h1v1h-1zM2 9h1v1h-1zM6 9h1v1h-1zM9 9h1v1h-1zM1 10h1v1h-1zM6 10h1v1h-1zM10 10h1v1h-1zM1 11h1v1h-1zM6 11h1v1h-1zM10 11h1v1h-1zM4 12h2v1h-2z"/><path id="r12_9884" d="M1 1h4v1h-4zM6 1h6v1h-6zM3 2h1v1h-1zM8 2h1v1h-1zM1 3h3v1h-3zM6 3h5v1h-5zM3 4h1v1h-1zM6 4h1v1h-1zM10 4h1v1h-1zM0 5h5v1h-5zM6 5h1v1h-1zM8 5h1v1h-1zM10 5h1v1h-1zM2 6h1v1h-1zM4 6h1v1h-1zM6 6h1v1h-1zM8 6h1v1h-1zM10 6h1v1h-1zM2 7h1v1h-1zM4 7h1v1h-1zM6 7h1v1h-1zM8 7h1v1h-1zM10 7h1v1h-1zM2 8h1v1h-1zM6 8h1v1h-1zM8 8h1v1h-1zM10 8h1v1h-1zM2 9h1v1h-1zM7 9h1v1h-1zM9 9h1v1h-1zM2 10h1v1h-1zM6 10h2v1h-2zM9 10h2v1h-2zM1 11h2v1h-2zM5 11h1v1h-1z"/><path id="r12_89c8" d="M4 0h1v1h-1zM7 0h1v1h-1zM1 1h1v1h-1zM4 1h1v1h-1zM7 1h4v1h-4zM1 2h1v1h-1zM4 2h1v1h-1zM6 2h1v1h-1zM8 2h1v1h-1zM1 3h1v1h-1zM4 3h1v1h-1zM6 3h1v1h-1zM8 3h2v1h-2zM4 4h1v1h-1zM9 4h1v1h-1zM2 5h8v1h-8zM2 6h1v1h-1zM9 6h1v1h-1zM2 7h1v1h-1zM5 7h1v1h-1zM9 7h1v1h-1zM2 8h1v1h-1zM5 8h1v1h-1zM9 8h1v1h-1zM5 9h2v1h-2zM3 10h2v1h-2zM6 10h1v1h-1zM10 10h1v1h-1zM1 11h2v1h-2zM7 11h4v1h-4z"/><path id="r12_786e" d="M6 1h1v1h-1zM1 2h4v1h-4zM6 2h4v1h-4zM2 3h1v1h-1zM5 3h1v1h-1zM8 3h1v1h-1zM2 4h1v1h-1zM5 4h6v1h-6zM1 5h1v1h-1zM4 5h2v1h-2zM8 5h1v1h-1zM10 5h1v1h-1zM1 6h3v1h-3zM5 6h1v1h-1zM8 6h1v1h-1zM10 6h1v1h-1zM1 7h1v1h-1zM3 7h1v1h-1zM5 7h6v1h-6zM1 8h1v1h-1zM3 8h1v1h-1zM5 8h1v1h-1zM8 8h1v1h-1zM10 8h1v1h-1zM1 9h1v1h-1zM3 9h1v1h-1zM5 9h6v1h-6zM1 10h1v1h-1zM3 10h1v1h-1zM5 10h1v1h-1zM8 10h1v1h-1zM10 10h1v1h-1zM1 11h2v1h-2zM5 11h1v1h-1zM8 11h1v1h-1zM10 11h1v1h-1zM4 12h1v1h-1zM9 12h2v1h-2z"/><path id="r12_5b9a" d="M5 0h1v1h-1zM1 1h10v1h-10zM1 2h1v1h-1zM10 2h1v1h-1zM1 3h1v1h-1zM10 3h1v1h-1zM3 4h7v1h-7zM5 5h1v1h-1zM3 6h1v1h-1zM5 6h1v1h-1zM2 7h1v1h-1zM6 7h4v1h-4zM2 8h2v1h-2zM5 8h1v1h-1zM2 9h2v1h-2zM5 9h1v1h-1zM1 10h1v1h-1zM4 10h2v1h-2zM0 11h2v1h-2zM5 11h6v1h-6z"/><path id="r12_53d6" d="M1 2h10v1h-10zM1 3h1v1h-1zM4 3h1v1h-1zM7 3h1v1h-1zM10 3h1v1h-1zM1 4h4v1h-4zM7 4h1v1h-1zM10 4h1v1h-1zM1 5h1v1h-1zM4 5h1v1h-1zM7 5h1v1h-1zM10 5h1v1h-1zM1 6h1v1h-1zM4 6h1v1h-1zM7 6h1v1h-1zM9 6h1v1h-1zM1 7h4v1h-4zM7 7h1v1h-1zM9 7h1v1h-1zM1 8h1v1h-1zM4 8h1v1h-1zM8 8h2v1h-2zM1 9h1v1h-1zM4 9h2v1h-2zM8 9h1v1h-1zM1 10h4v1h-4zM7 10h3v1h-3zM4 11h1v1h-1zM7 11h1v1h-1zM10 11h1v1h-1zM4 12h1v1h-1zM6 12h1v1h-1zM10 12h1v1h-1z"/><path id="r12_6d88" d="M1 1h1v1h-1zM7 1h1v1h-1zM2 2h1v1h-1zM5 2h1v1h-1zM7 2h1v1h-1zM10 2h1v1h-1zM5 3h1v1h-1zM7 3h1v1h-1zM9 3h1v1h-1zM7 4h1v1h-1zM0 5h2v1h-2zM5 5h6v1h-6zM2 6h1v1h-1zM4 6h1v1h-1zM10 6h1v1h-1zM5 7h6v1h-6zM3 8h2v1h-2zM10 8h1v1h-1zM2 9h1v1h-1zM5 9h6v1h-6zM2 10h1v1h-1zM4 10h1v1h-1zM10 10h1v1h-1zM1 11h1v1h-1zM4 11h1v1h-1zM10 11h1v1h-1zM1 12h1v1h-1zM8 12h3v1h-3z"/><path id="r12_5e2e" d="M3 1h1v1h-1zM7 1h4v1h-4zM1 2h5v1h-5zM7 2h1v1h-1zM10 2h1v1h-1zM3 3h1v1h-1zM7 3h1v1h-1zM9 3h1v1h-1zM1 4h5v1h-5zM7 4h1v1h-1zM9 4h1v1h-1zM1 5h5v1h-5zM7 5h1v1h-1zM10 5h1v1h-1zM3 6h1v1h-1zM7 6h1v1h-1zM10 6h1v1h-1zM2 7h1v1h-1zM7 7h1v1h-1zM9 7h1v1h-1zM1 8h1v1h-1zM5 8h1v1h-1zM2 9h8v1h-8zM2 10h1v1h-1zM5 10h1v1h-1zM9 10h1v1h-1zM2 11h1v1h-1zM5 11h1v1h-1zM8 11h2v1h-2zM5 12h1v1h-1z"/><path id="r12_52a9" d="M1 2h4v1h-4zM7 2h1v1h-1zM1 3h1v1h-1zM4 3h1v1h-1zM7 3h1v1h-1zM1 4h4v1h-4zM6 4h5v1h-5zM1 5h1v1h-1zM4 5h1v1h-1zM7 5h1v1h-1zM10 5h1v1h-1zM1 6h1v1h-1zM4 6h1v1h-1zM7 6h1v1h-1zM10 6h1v1h-1zM1 7h4v1h-4zM7 7h1v1h-1zM10 7h1v1h-1zM1 8h1v1h-1zM4 8h1v1h-1zM7 8h1v1h-1zM10 8h1v1h-1zM1 9h1v1h-1zM4 9h2v1h-2zM7 9h1v1h-1zM10 9h1v1h-1zM1 10h4v1h-4zM6 10h1v1h-1zM10 10h1v1h-1zM5 11h2v1h-2zM10 11h1v1h-1zM5 12h1v1h-1zM8 12h2v1h-2z"/><path id="r12_64ad" d="M2 1h1v1h-1zM9 1h2v1h-2zM2 2h1v1h-1zM4 2h5v1h-5zM2 3h1v1h-1zM5 3h1v1h-1zM7 3h1v1h-1zM9 3h1v1h-1zM0 4h3v1h-3zM4 4h7v1h-7zM2 5h1v1h-1zM6 5h3v1h-3zM2 6h2v1h-2zM5 6h1v1h-1zM7 6h1v1h-1zM9 6h1v1h-1zM2 7h1v1h-1zM4 7h1v1h-1zM7 7h1v1h-1zM10 7h2v1h-2zM0 8h3v1h-3zM5 8h6v1h-6zM2 9h1v1h-1zM5 9h1v1h-1zM7 9h1v1h-1zM10 9h1v1h-1zM2 10h1v1h-1zM5 10h6v1h-6zM2 11h1v1h-1zM5 11h1v1h-1zM7 11h1v1h-1zM10 11h1v1h-1zM1 12h2v1h-2zM5 12h6v1h-6z"/><path id="r12_653e" d="M7 0h1v1h-1zM3 1h1v1h-1zM7 1h1v1h-1zM1 2h5v1h-5zM7 2h5v1h-5zM2 3h1v1h-1zM6 3h1v1h-1zM10 3h1v1h-1zM2 4h1v1h-1zM6 4h2v1h-2zM9 4h1v1h-1zM2 5h3v1h-3zM6 5h2v1h-2zM9 5h1v1h-1zM2 6h1v1h-1zM4 6h1v1h-1zM7 6h1v1h-1zM9 6h1v1h-1zM2 7h1v1h-1zM4 7h1v1h-1zM7 7h1v1h-1zM9 7h1v1h-1zM2 8h1v1h-1zM4 8h1v1h-1zM8 8h1v1h-1zM1 9h1v1h-1zM4 9h1v1h-1zM7 9h3v1h-3zM1 10h1v1h-1zM4 10h1v1h-1zM6 10h2v1h-2zM9 10h2v1h-2zM3 11h4v1h-4zM10 11h1v1h-1z"/><path id="r12_5f71" d="M1 1h6v1h-6zM10 1h1v1h-1zM1 2h1v1h-1zM6 2h1v1h-1zM9 2h1v1h-1zM1 3h6v1h-6zM8 3h1v1h-1zM1 4h6v1h-6zM3 5h1v1h-1zM10 5h1v1h-1zM1 6h6v1h-6zM9 6h1v1h-1zM1 7h6v1h-6zM8 7h1v1h-1zM1 8h1v1h-1zM6 8h1v1h-1zM1 9h6v1h-6zM10 9h1v1h-1zM2 10h2v1h-2zM5 10h1v1h-1zM9 10h2v1h-2zM1 11h1v1h-1zM3 11h1v1h-1zM6 11h1v1h-1zM8 11h2v1h-2zM2 12h2v1h-2zM7 12h1v1h-1z"/><path id="r12_7247" d="M2 1h1v1h-1zM6 1h1v1h-1zM2 2h1v1h-1zM6 2h1v1h-1zM2 3h1v1h-1zM6 3h1v1h-1zM2 4h9v1h-9zM2 5h1v1h-1zM2 6h1v1h-1zM2 7h7v1h-7zM2 8h1v1h-1zM8 8h1v1h-1zM2 9h1v1h-1zM8 9h1v1h-1zM1 10h1v1h-1zM8 10h1v1h-1zM1 11h1v1h-1zM8 11h1v1h-1zM8 12h1v1h-1z"/><path id="r12_6863" d="M2 1h1v1h-1zM7 1h1v1h-1zM2 2h1v1h-1zM5 2h1v1h-1zM7 2h1v1h-1zM10 2h1v1h-1zM2 3h1v1h-1zM5 3h1v1h-1zM7 3h1v1h-1zM10 3h1v1h-1zM1 4h5v1h-5zM7 4h1v1h-1zM9 4h1v1h-1zM2 5h1v1h-1zM7 5h1v1h-1zM2 6h2v1h-2zM5 6h6v1h-6zM1 7h2v1h-2zM4 7h1v1h-1zM10 7h1v1h-1zM1 8h2v1h-2zM5 8h6v1h-6zM0 9h1v1h-1zM2 9h1v1h-1zM10 9h1v1h-1zM2 10h1v1h-1zM10 10h1v1h-1zM2 11h1v1h-1zM4 11h7v1h-7zM2 12h1v1h-1zM10 12h1v1h-1z"/></defs></svg>
<div class="a" style="left:0;top:0;width:774px;height:26px;background:linear-gradient(#7ca2e3 0px,#7ca2e3 1px,#7a95de 2px,#7b93df 7px,#7b96e0 12px,#7ea4e6 17px,#80a8e8 20px,#80a2e6 23px,#7890dc 24px,#6e7eea 25px,#6e7eea 26px)"></div>
<svg width="774" height="617" shape-rendering="crispEdges">
<path d="M0 6 H1 V5 H12 V7 H15 V9 H10 V11 H0 Z" fill="#000"/>
<rect x="1" y="6" width="1" height="5" fill="#ff0000"/>
<rect x="4" y="6" width="7" height="1" fill="#ff0000"/>
<rect x="3" y="9" width="7" height="1" fill="#ff0000"/>
<rect x="2" y="7" width="1" height="3" fill="#0000ff"/>
<rect x="3" y="7" width="11" height="1.4" fill="#0000ff"/>
<rect x="6" y="11" width="2" height="1" fill="#000"/>
</svg>
<svg width="774" height="617"><text x="-0.5" y="19" font-family="Liberation Sans" font-weight="bold" font-size="7" fill="#0000ff" textLength="15.5" lengthAdjust="spacingAndGlyphs">FESTO</text></svg>
<svg width="774" height="617"><text x="19.5" y="16.6" font-family="Liberation Serif" font-weight="bold" font-size="12.5" fill="#eef2fc" textLength="79" lengthAdjust="spacing">FluidSIM-H</text></svg>
<div class="a" style="left:705px;top:2px;width:21px;height:21px;border:1px solid #b4c6f0;border-radius:3px;background:linear-gradient(160deg,#5a82e8 0%,#3f6ae0 60%,#3a62d8 100%)"></div>
<div class="a" style="left:710px;top:15px;width:7px;height:3px;background:#fff"></div>
<div class="a" style="left:728px;top:2px;width:21px;height:21px;border:1px solid #b4c6f0;border-radius:3px;background:linear-gradient(160deg,#5a82e8 0%,#3f6ae0 60%,#3a62d8 100%)"></div>
<div class="a" style="left:733px;top:7px;width:11px;height:11px;border:1px solid #fff;border-top-width:3px"></div>
<div class="a" style="left:751px;top:2px;width:21px;height:21px;border:1px solid #b4c6f0;border-radius:3px;background:linear-gradient(160deg,#c88088 0%,#b86470 60%,#b05c6a 100%)"></div>
<svg width="774" height="617"><path d="M756.5 7.5L766.5 17.5M766.5 7.5L756.5 17.5" stroke="#fff" stroke-width="2.2"/></svg>
<div class="a" style="left:0;top:26px;width:774px;height:48px;background:#ece9d8"></div>
<div class="a" style="left:0;top:45px;width:774px;height:1px;background:#aca899"></div>
<div class="a" style="left:0;top:46px;width:774px;height:1px;background:#fff"></div>
<svg width="774" height="617" style="position:absolute;left:0;top:0" fill="#aca899"><use href="#r12_6587" x="2" y="29"/><use href="#r12_4ef6" x="14" y="29"/></svg>
<svg width="774" height="617" style="position:absolute;left:0;top:0" fill="#aca899"><use href="#r12_7f16" x="38" y="29"/><use href="#r12_8f91" x="50" y="29"/></svg>
<svg width="774" height="617" style="position:absolute;left:0;top:0" fill="#aca899"><use href="#r12_6267" x="74" y="29"/><use href="#r12_884c" x="86" y="29"/></svg>
<svg width="774" height="617" style="position:absolute;left:0;top:0" fill="#aca899"><use href="#r12_5143" x="110" y="29"/><use href="#r12_4ef6" x="122" y="29"/><use href="#r12_5e93" x="134" y="29"/></svg>
<svg width="774" height="617" style="position:absolute;left:0;top:0" fill="#aca899"><use href="#r12_63d2" x="157" y="29"/><use href="#r12_5165" x="169" y="29"/></svg>
<svg width="774" height="617" style="position:absolute;left:0;top:0" fill="#aca899"><use href="#r12_6559" x="194" y="29"/><use href="#r12_5b66" x="206" y="29"/></svg>
<svg width="774" height="617" style="position:absolute;left:0;top:0" fill="#aca899"><use href="#r12_5bf9" x="230" y="29"/><use href="#r12_8c61" x="242" y="29"/></svg>
<svg width="774" height="617" style="position:absolute;left:0;top:0" fill="#aca899"><use href="#r12_89c6" x="266" y="29"/><use href="#r12_56fe" x="278" y="29"/></svg>
<svg width="774" height="617" style="position:absolute;left:0;top:0" fill="#aca899"><use href="#r12_9009" x="301" y="29"/><use href="#r12_9879" x="313" y="29"/></svg>
<svg width="774" height="617" style="position:absolute;left:0;top:0" fill="#aca899"><use href="#r12_7a97" x="338" y="29"/><use href="#r12_53e3" x="350" y="29"/></svg>
<svg width="774" height="617" style="position:absolute;left:0;top:0" fill="#aca899"><use href="#r12_3f" x="373" y="29"/></svg>
<div class="a" style="left:374px;top:41px;width:6px;height:1px;background:#aca899"></div>
<div class="a" style="left:1px;top:48px;width:1px;height:24px;background:#aca899"></div>
<div class="a" style="left:2px;top:48px;width:1px;height:24px;background:#fff"></div>
<div class="a" style="left:0;top:73px;width:774px;height:1px;background:#f6f5ee"></div>
<div class="a" style="left:0;top:74px;width:774px;height:1px;background:#7c7c6c"></div>
<div class="a" style="left:772px;top:47px;width:1px;height:27px;background:#7c7c6c"></div>
<div class="a" style="left:772px;top:74px;width:2px;height:519px;background:#ece9d8"></div>
<div class="a" style="left:79px;top:49px;width:1px;height:22px;background:#aca899"></div>
<div class="a" style="left:80px;top:49px;width:1px;height:22px;background:#fff"></div>
<div class="a" style="left:132px;top:49px;width:1px;height:22px;background:#aca899"></div>
<div class="a" style="left:133px;top:49px;width:1px;height:22px;background:#fff"></div>
<div class="a" style="left:235px;top:49px;width:1px;height:22px;background:#aca899"></div>
<div class="a" style="left:236px;top:49px;width:1px;height:22px;background:#fff"></div>
<div class="a" style="left:385px;top:49px;width:1px;height:22px;background:#aca899"></div>
<div class="a" style="left:386px;top:49px;width:1px;height:22px;background:#fff"></div>
<div class="a" style="left:415px;top:49px;width:1px;height:22px;background:#aca899"></div>
<div class="a" style="left:416px;top:49px;width:1px;height:22px;background:#fff"></div>
<div class="a" style="left:565px;top:49px;width:1px;height:22px;background:#aca899"></div>
<div class="a" style="left:566px;top:49px;width:1px;height:22px;background:#fff"></div>
<div class="a" style="left:595px;top:49px;width:1px;height:22px;background:#aca899"></div>
<div class="a" style="left:596px;top:49px;width:1px;height:22px;background:#fff"></div>
<div class="a" style="left:672px;top:49px;width:1px;height:22px;background:#aca899"></div>
<div class="a" style="left:673px;top:49px;width:1px;height:22px;background:#fff"></div>
<svg width="774" height="617" shape-rendering="crispEdges">
<!-- new -->
<path d="M10.5 53.5 H18.5 L21.5 56.5 V66.5 H10.5 Z" fill="#fff" stroke="#000"/>
<path d="M18.5 53.5 V56.5 H21.5" fill="none" stroke="#000"/>
<!-- open -->
<path d="M32.5 57.5 H36.5 L37.5 56.5 H41.5 V59.5 H48 L43 66.5 H32.5 Z" fill="#fff" stroke="#000"/>
<path d="M33.5 66.5 L37.5 60.5 H47.5 L43.5 66.5 Z" fill="#aca899" stroke="#000"/>
<path d="M40.5 55.5 Q43 52 46.5 55.5" fill="none" stroke="#000"/>
<path d="M45 54 H48 V57 Z" fill="#000"/>
<!-- save disabled -->
<path d="M56 53 H70 V67 H56 Z" fill="#aca899"/>
<path d="M59 54 H67 V59 H59 Z" fill="#d8d4c4"/>
<path d="M64 62 H66 V66 H64 Z" fill="#ece9d8"/>
<!-- library open -->
<path d="M85.5 55.5 H97.5 V65.5 H85.5 Z" fill="#fff" stroke="#000"/>
<path d="M85.5 59.5 H97.5 M85.5 62.5 H97.5 M89.5 55.5 V65.5 M93.5 55.5 V65.5" stroke="#aca899"/>
<path d="M85.5 67.5 L89.5 62.5 H101.5 L97.5 67.5 Z" fill="#aca899" stroke="#000"/>
<path d="M94.5 53.5 Q97 51 100.5 54.5" fill="none" stroke="#000"/>
<path d="M99 53 H102 V56 Z" fill="#000"/>
<!-- printer -->
<path d="M113.5 53.5 H122.5 L121.5 58.5 H112.5 Z" fill="#fff" stroke="#000"/>
<path d="M109.5 58.5 H124.5 V66.5 H109.5 Z" fill="#ece9d8" stroke="#000" />
<path d="M110 62 H124 V64 H110 Z" fill="#fff"/>
<path d="M115 62 H120 V63 H115 Z" fill="#e0e000"/>
<path d="M109.5 61.5 H124.5 M109.5 64.5 H124.5" stroke="#000"/>
<!-- undo disabled -->
<path d="M142 60 Q146 54 152 58 Q153 62 150 64" fill="none" stroke="#aca899" stroke-width="1.6"/>
<path d="M140 57 L145 62 H140 Z" fill="#aca899"/>
<!-- cut -->
<path d="M168.5 54 L172 61 L175.5 54 M172 61 V62" fill="none" stroke="#aca899"/>
<ellipse cx="168.5" cy="64.5" rx="2" ry="2.5" fill="none" stroke="#aca899"/>
<ellipse cx="174.5" cy="64.5" rx="2" ry="2.5" fill="none" stroke="#aca899"/>
<!-- copy -->
<path d="M188.5 53.5 H194.5 L196.5 55.5 V63.5 H188.5 Z" fill="#ece9d8" stroke="#aca899"/>
<path d="M190 57.5 H195 M190 59.5 H195 M190 61.5 H194" stroke="#aca899"/>
<path d="M194.5 57.5 H200.5 L202.5 59.5 V67.5 H194.5 Z" fill="#ece9d8" stroke="#aca899"/>
<path d="M196 61.5 H201 M196 63.5 H201 M196 65.5 H200" stroke="#aca899"/>
<!-- paste -->
<path d="M212 55 Q212 53 214 53 H224 Q226 53 226 55 V66 H212 Z" fill="#aca899"/>
<path d="M216 55 H222 V56 H216 Z" fill="#ece9d8"/>
<path d="M218.5 59.5 H226.5 V67.5 H218.5 Z" fill="#ece9d8" stroke="#aca899"/>
<path d="M220 62.5 H225 M220 64.5 H225" stroke="#aca899"/>
<!-- align icons -->
<g fill="none" stroke="#aca899">
<path d="M242.5 53.5 H250.5 V56.5 H242.5 Z M242.5 58.5 H248.5 V61.5 H242.5 Z M242.5 63.5 H256.5 V66.5 H242.5 Z M241.5 53 V67"/>
<path d="M268.5 53.5 H275.5 V56.5 H268.5 Z M269.5 58.5 H274.5 V61.5 H269.5 Z M267.5 63.5 H279.5 V66.5 H267.5 Z"/>
<path d="M296.5 53.5 H303.5 V56.5 H296.5 Z M298.5 58.5 H303.5 V61.5 H298.5 Z M291.5 63.5 H303.5 V66.5 H291.5 Z"/>
<path d="M313.5 53.5 H316.5 V60.5 H313.5 Z M318.5 53.5 H321.5 V58.5 H318.5 Z M325.5 53.5 H328.5 V64.5 H325.5 Z"/>
<path d="M337.5 55.5 H340.5 V63.5 H337.5 Z M342.5 56.5 H345.5 V62.5 H342.5 Z M349.5 53.5 H352.5 V65.5 H349.5 Z"/>
<path d="M361.5 58.5 H364.5 V66.5 H361.5 Z M366.5 60.5 H369.5 V66.5 H366.5 Z M373.5 54.5 H376.5 V66.5 H373.5 Z"/>
</g>
<!-- grid disabled -->
<path d="M393.5 54.5 H403.5 V66.5 H393.5 Z M393.5 57.5 H403.5 M393.5 60.5 H403.5 M393.5 63.5 H403.5 M396.5 54.5 V66.5 M400.5 54.5 V66.5" fill="none" stroke="#aca899"/>
</svg>
<svg width="774" height="617">
<g fill="none" stroke="#000" stroke-width="1.6">
<circle cx="428.5" cy="59" r="6.3" fill="#fff"/>
<path d="M433 63.5 L437.5 68" stroke-width="2.4"/>
<circle cx="476.5" cy="59" r="6.3" fill="#fff"/>
<path d="M481 63.5 L485.5 68" stroke-width="2.4"/>
<circle cx="500.5" cy="59" r="6.3" fill="#fff"/>
<path d="M505 63.5 L509.5 68" stroke-width="2.4"/>
<circle cx="524.5" cy="59" r="6.3" fill="#fff"/>
<path d="M529 63.5 L533.5 68" stroke-width="2.4"/>
<circle cx="548.5" cy="59" r="6.3" fill="#fff"/>
<path d="M553 63.5 L557.5 68" stroke-width="2.4"/>
</g>
<g fill="none" stroke="#aca899" stroke-width="1.6">
<circle cx="452.5" cy="59" r="6.3"/>
<path d="M457 63.5 L461.5 68" stroke-width="2.4"/>
<path d="M448 59 H457 M449.5 57 L447.5 59 L449.5 61 M455.5 57 L457.5 59 L455.5 61"/>
</g>
<text x="428.5" y="62" font-family="Liberation Sans" font-size="7.5" font-weight="bold" text-anchor="middle" fill="#000">1:1</text>
<path d="M472.5 55.5 H480.5 V62.5 H472.5 Z M474 57 L476.5 59 M479 57 L476.5 59 M474 61 L476.5 59 M479 61 L476.5 59" fill="none" stroke="#000" stroke-width="1"/>
<path d="M496.5 56.5 H504.5 V61.5 H496.5 Z" fill="none" stroke="#000" stroke-width="1.2"/>
<path d="M520.5 59 H528.5 M524.5 55 V63" stroke="#000" stroke-width="1.4"/>
<path d="M544.5 59 H552.5" stroke="#000" stroke-width="1.4"/>
<!-- check doc -->
<path d="M574.5 54.5 H582.5 L585.5 57.5 V67.5 H574.5 Z" fill="none" stroke="#aca899"/>
<path d="M576 61 L578.5 65 L584 56" fill="none" stroke="#aca899" stroke-width="1.2"/>
<!-- media -->
<g fill="#aca899">
<rect x="605" y="55" width="9" height="9"/>
<path d="M629 54 L639 59.5 L629 65 Z"/>
<rect x="652" y="54" width="3" height="11"/><rect x="659" y="54" width="3" height="11"/>
<rect x="679" y="54" width="3" height="11"/><path d="M688 54 V65 L682 59.5 Z M695 54 V65 L689 59.5 Z"/>
<rect x="704" y="54" width="3" height="11"/><path d="M708 54 L718 59.5 L708 65 Z"/>
<path d="M729 54 L738 59.5 L729 65 Z"/><rect x="738" y="54" width="3" height="11"/>
<path d="M751 54 L757 59.5 L751 65 Z M757 54 L763 59.5 L757 65 Z"/><rect x="764" y="54" width="3" height="11"/>
</g>
</svg>

<div class="a" style="left:0;top:75px;width:299px;height:542px;background:#7088e0;border-radius:6px 6px 0 0"></div>
<div class="a" style="left:0;top:75px;width:299px;height:30px;border-radius:7px 7px 0 0;background:linear-gradient(#7090e8 0px,#a0b8ee 1px,#a0b8ee 2.5px,#8cb0e0 3.5px,#7b96e0 5px,#7b94df 14px,#7ea2e4 20px,#80a8e8 26px,#7a98e0 28px,#7084e0 29px,#7084e0 30px)"></div>
<div class="a" style="left:0;top:105px;width:4px;height:512px;background:linear-gradient(90deg,#6a80e0,#8aa0ee)"></div>
<div class="a" style="left:295px;top:105px;width:4px;height:512px;background:linear-gradient(90deg,#8aa0ee,#6a80e0)"></div>
<svg width="774" height="617" shape-rendering="crispEdges">
<path d="M6 85 H7 V84 H18 V86 H21 V88 H16 V90 H6 Z" fill="#000"/>
<rect x="7" y="85" width="1" height="5" fill="#ff0000"/>
<rect x="10" y="85" width="7" height="1" fill="#ff0000"/>
<rect x="9" y="88" width="7" height="1" fill="#ff0000"/>
<rect x="8" y="86" width="1" height="3" fill="#0000ff"/>
<rect x="9" y="86" width="11" height="1.4" fill="#0000ff"/>
<rect x="12" y="90" width="2" height="1" fill="#000"/>
</svg>
<svg width="774" height="617"><text x="5.5" y="98" font-family="Liberation Sans" font-weight="bold" font-size="7" fill="#0000ff" textLength="15.5" lengthAdjust="spacingAndGlyphs">FESTO</text></svg>
<svg width="774" height="617" style="position:absolute;left:0;top:0" fill="#f4f6fc"><use href="#b13_6574" x="25" y="82"/><use href="#b13_4e2a" x="39" y="82"/><use href="#b13_89c6" x="53" y="82"/><use href="#b13_56fe" x="67" y="82"/><use href="#b13_ff0d" x="81" y="82"/><use href="#b13_5143" x="95" y="82"/><use href="#b13_4ef6" x="109" y="82"/><use href="#b13_5e93" x="123" y="82"/></svg>
<div class="a" style="left:226px;top:81px;width:21px;height:21px;border:1px solid #b4c6f0;border-radius:3px;background:linear-gradient(160deg,#5a82e8 0%,#3f6ae0 60%,#3a62d8 100%)"></div>
<div class="a" style="left:231px;top:94px;width:7px;height:3px;background:#fff"></div>
<div class="a" style="left:249px;top:81px;width:21px;height:21px;border:1px solid #b4c6f0;border-radius:3px;background:linear-gradient(160deg,#5a82e8 0%,#3f6ae0 60%,#3a62d8 100%)"></div>
<div class="a" style="left:254px;top:86px;width:11px;height:11px;border:1px solid #fff;border-top-width:3px"></div>
<div class="a" style="left:272px;top:81px;width:21px;height:21px;border:1px solid #b4c6f0;border-radius:3px;background:linear-gradient(160deg,#c88088 0%,#b86470 60%,#b05c6a 100%)"></div>
<svg width="774" height="617"><path d="M277.5 86.5L287.5 96.5M287.5 86.5L277.5 96.5" stroke="#fff" stroke-width="2.2"/></svg>
<div class="a" style="left:4px;top:105px;width:291px;height:490px;background:#fff;border-left:1px solid #aca899;border-top:1px solid #aca899"></div>
<div class="a" style="left:5px;top:106px;width:290px;height:490px;border-left:1px solid #716f64;border-top:1px solid #716f64"></div>
<div class="a" style="left:276px;top:107px;width:18px;height:486px;background:linear-gradient(90deg,#f3f1ea,#fdfdfa 40%,#f3f1ea)"></div>
<div class="a" style="left:278px;top:580px;width:13px;height:13px;border-radius:2px;background:linear-gradient(135deg,#d8e4fc,#b8cdf6);border:1px solid #c0d0f4"></div>
<svg width="774" height="617"><path d="M281 584 L284.5 588 L288 584" stroke="#4d6185" stroke-width="2" fill="none"/></svg>
<svg width="774" height="617">
<rect x="7.5" y="108.5" width="64" height="64" fill="#fff" stroke="#8c8c8c"/>
<rect x="75.5" y="108.5" width="64" height="64" fill="#fff" stroke="#8c8c8c"/>
<rect x="143.5" y="108.5" width="64" height="64" fill="#fff" stroke="#8c8c8c"/>
<rect x="211.5" y="108.5" width="64" height="64" fill="#fff" stroke="#8c8c8c"/>
<rect x="7.5" y="176.5" width="64" height="64" fill="#fff" stroke="#8c8c8c"/>
<rect x="75.5" y="176.5" width="64" height="64" fill="#fff" stroke="#8c8c8c"/>
<rect x="143.5" y="176.5" width="64" height="64" fill="#fff" stroke="#8c8c8c"/>
<rect x="211.5" y="176.5" width="64" height="64" fill="#fff" stroke="#8c8c8c"/>
<rect x="7.5" y="244.5" width="64" height="64" fill="#fff" stroke="#8c8c8c"/>
<rect x="75.5" y="244.5" width="64" height="64" fill="#fff" stroke="#8c8c8c"/>
<rect x="143.5" y="244.5" width="64" height="64" fill="#fff" stroke="#8c8c8c"/>
<rect x="211.5" y="244.5" width="64" height="64" fill="#fff" stroke="#8c8c8c"/>
<rect x="7.5" y="312.5" width="64" height="64" fill="#fff" stroke="#8c8c8c"/>
<rect x="75.5" y="312.5" width="64" height="64" fill="#fff" stroke="#8c8c8c"/>
<rect x="143.5" y="312.5" width="64" height="64" fill="#fff" stroke="#8c8c8c"/>
<rect x="211.5" y="312.5" width="64" height="64" fill="#fff" stroke="#8c8c8c"/>
<rect x="7.5" y="380.5" width="64" height="64" fill="#fff" stroke="#8c8c8c"/>
<rect x="75.5" y="380.5" width="64" height="64" fill="#fff" stroke="#8c8c8c"/>
<rect x="143.5" y="380.5" width="64" height="64" fill="#fff" stroke="#8c8c8c"/>
<rect x="211.5" y="380.5" width="64" height="64" fill="#fff" stroke="#8c8c8c"/>
<rect x="7.5" y="448.5" width="64" height="64" fill="#fff" stroke="#8c8c8c"/>
<rect x="75.5" y="448.5" width="64" height="64" fill="#fff" stroke="#8c8c8c"/>
<rect x="143.5" y="448.5" width="64" height="64" fill="#fff" stroke="#8c8c8c"/>
<rect x="211.5" y="448.5" width="64" height="64" fill="#fff" stroke="#8c8c8c"/>
<rect x="7.5" y="516.5" width="64" height="64" fill="#fff" stroke="#8c8c8c"/>
<rect x="75.5" y="516.5" width="64" height="64" fill="#fff" stroke="#8c8c8c"/>
<rect x="143.5" y="516.5" width="64" height="64" fill="#fff" stroke="#8c8c8c"/>
<rect x="211.5" y="516.5" width="64" height="64" fill="#fff" stroke="#8c8c8c"/>
<rect x="7.5" y="584.5" width="64" height="64" fill="#fff" stroke="#8c8c8c"/>
<rect x="75.5" y="584.5" width="64" height="64" fill="#fff" stroke="#8c8c8c"/>
<rect x="143.5" y="584.5" width="64" height="64" fill="#fff" stroke="#8c8c8c"/>
<rect x="211.5" y="584.5" width="64" height="64" fill="#fff" stroke="#8c8c8c"/>
<g fill="none" stroke="#000" stroke-width="1" shape-rendering="crispEdges">
<path d="M27.5 128 V134" />
<path d="M27.5 133 L38 149 H17 Z" fill="#000" shape-rendering="auto"/>
<path d="M76.5 115.5 H131.5 M76.5 153.5 H131.5 M76.5 115.5 V153.5 M130.5 115.5 V153.5" stroke-dasharray="4 3"/>
<path d="M106.5 110 V150 M124.5 110 V150 H130 M124.5 129.5 H136 M81.5 150.5 H124.5 M85.5 124 V150 M85.5 127.5 H106.5"/>
<path d="M85.5 117 L88 120 L85.5 123 L83 120 Z" shape-rendering="auto"/>
<rect x="82.5" y="132.5" width="6" height="8" />
<path d="M80 134.5 H82 M80 138.5 H82 M89 138 L93 134 M91 136 L93 138" shape-rendering="auto"/>
<circle cx="106.5" cy="136.5" r="3.5" shape-rendering="auto"/>
<circle cx="117.5" cy="136.5" r="3.5" shape-rendering="auto"/>
<path d="M110 136.5 H114" stroke-width="2"/>
<path d="M153.5 137 V148.5 H173.5 V137 M163.5 128 V148"/>
<path d="M14 196.5 H23.5 L39.5 179.5 L55.5 196.5 L39.5 212.5 Z M55.5 196.5 H64" shape-rendering="auto"/>
<path d="M39.5 180 V212" stroke-dasharray="2 2"/>
<rect x="92.5" y="193.5" width="30" height="20"/>
<path d="M82 203.5 H132 M107.5 183 V203.5"/>
<circle cx="100.5" cy="203.5" r="2.5" fill="#fff" shape-rendering="auto"/>
<path d="M113 200 L117 203.5 L113 207" shape-rendering="auto"/>
<rect x="162.5" y="191.5" width="25" height="17"/>
<path d="M149 199.5 H162.5 M175.5 182 V191.5 M166.5 195 V204 M166.5 199.5 H181 M171.5 192 V195 M171.5 204 V208 M179.5 192 V195 M179.5 204 V208"/>
<path d="M12.5 261.5 H66.5 V288.5 H12.5 Z M39.5 261.5 V288.5 M25.5 288 V265"/>
<path d="M25.5 262 L28 269 H23 Z" fill="#000" shape-rendering="auto"/>
<path d="M53.5 253 V267.5 M49.5 267.5 H57.5 M53.5 282.5 V294 M49.5 282.5 H57.5"/>
<path d="M80.5 261.5 H134.5 V288.5 H80.5 Z M107.5 261.5 V288.5 M86.5 288 V265 M100.5 282.5 V288 M97.5 282.5 H103.5 M114.5 282.5 V294 M111.5 282.5 H117.5 M128.5 288 V294"/>
<path d="M86.5 262 L89 269 H84 Z" fill="#000" shape-rendering="auto"/>
<path d="M114 253 L128 288" shape-rendering="auto"/>
<path d="M128 288 L123 281 L128 280 Z" fill="#000" shape-rendering="auto"/>
<path d="M148.5 261.5 H200 V288.5 H148.5 Z M175.5 261.5 V288.5 M153.5 288 V265 M168.5 262 V285"/>
<path d="M153.5 262 L156 269 H151 Z M168.5 288 L166 281 H171 Z" fill="#000" shape-rendering="auto"/>
<path d="M19.5 318.5 H60.5 V333.5 H19.5 Z M23.5 318 V335 M23.5 323.5 H61.5 M23.5 327.5 H61.5 M55.5 334 V337"/>
<path d="M85.5 318.5 H131.5 V333.5 H85.5 Z M92.5 318 V335 M92.5 323.5 H134 M92.5 327.5 H134 M90.5 318.5 V333.5 M126.5 334 V337"/>
<path d="M82 333 L95 313" shape-rendering="auto"/>
<path d="M95.5 312 L93 317 L91.5 315 Z" fill="#000" shape-rendering="auto"/>
<path d="M153.5 318.5 H200 V333.5 H153.5 Z M157.5 318 V335 M157.5 323.5 H200 M157.5 327.5 H200"/>
<rect x="11.5" y="391.5" width="56" height="10"/>
<path d="M16.2 391.5 V401.5 M20.8 391.5 V401.5 M25.5 391.5 V401.5 M30.2 391.5 V401.5 M34.9 391.5 V401.5 M39.5 391.5 V401.5 M44.2 391.5 V401.5 M48.9 391.5 V401.5 M53.5 391.5 V401.5 M58.2 391.5 V401.5 M62.9 391.5 V401.5"/>
<rect x="77" y="382" width="61" height="36" stroke-width="2"/>
<path d="M90.5 382 V418 M98.5 382 V418"/>
<path d="M146.5 383.5 H200 V388.5 H146.5 Z M168.5 383.5 V388.5"/>
<path d="M18 469.5 H25 M54 469.5 H60 M25.5 462 V476 L54 462 V476 Z" shape-rendering="auto"/>
<path d="M89.5 462 V497"/>
<path d="M85 463.5 L93 465.5 L85 468 L93 470.5 L85 473 L93 475" shape-rendering="auto"/>
<path d="M83 479.5 L89.5 473.5 L96 479.5 L89.5 485.5 Z" fill="#fff" shape-rendering="auto"/>
<path d="M89.5 485.5 V497"/>
<rect x="148.5" y="466.5" width="28" height="28"/>
<path d="M162.5 459 V500 M173.5 494.5 V500"/>
<path d="M158.5 466 L166.5 468 L158.5 470.5 L166.5 473 L158.5 475.5" shape-rendering="auto"/>
<path d="M157 479.5 L162.5 474 L168 479.5 L162.5 485 Z" fill="#fff" shape-rendering="auto"/>
<path d="M162.5 485 V494.5"/>
<rect x="17.5" y="536.5" width="23" height="24"/>
<path d="M23 540 V557 M28.5 525 V536.5 M28.5 560.5 V568"/>
<path d="M23 558 L20.5 552 H25.5 Z" fill="#000" shape-rendering="auto"/>
<rect x="40.5" y="542.5" width="23" height="12"/>
<path d="M56 543 L63 548.5 L56 554 Z" fill="#000" shape-rendering="auto"/>
<path d="M11.5 548 V530.5 H23 L28 536 M28.5 563.5 H55 L63 555" stroke-dasharray="3 2" shape-rendering="auto"/>
<rect x="90.5" y="531.5" width="24" height="24"/>
<path d="M96.5 534 V553 M102.5 525 V531.5 M102.5 555.5 V561 M84 543.5 H90.5"/>
<path d="M96.5 554 L94 548 H99 Z" fill="#000" shape-rendering="auto"/>
<path d="M114.5 543 L117 536 L119.5 550 L122 536 L124.5 550 L127 536 L129.5 550 M116 552 L128 534" shape-rendering="auto"/>
<rect x="154.5" y="538.5" width="25" height="25"/>
<path d="M159.5 541 V563 M166.5 526 V538.5 M159.5 563.5 V567 M173.5 563.5 V567"/>
<path d="M159.5 541 L157 547 H162 Z M159.5 563 L157 557 H162 Z" fill="#000" shape-rendering="auto"/>
<path d="M147.5 551 V532.5 H162 L166 537" stroke-dasharray="3 2" shape-rendering="auto"/>
<path d="M179.5 550 L182 545 L185 556 L188 545 L191 556 L194 545 L197 556 L200 545 L202.5 550 M187 561 L199 541" shape-rendering="auto"/>
<path d="M199.5 540 L199 546 L195.5 544 Z" fill="#000" shape-rendering="auto"/>
<path d="M221 540.5 H265" />
<path d="M235 534 Q243.5 544 252 534 M235 547 Q243.5 537 252 547 M237 546 L252.5 532" shape-rendering="auto"/>
<path d="M253 531 L252 536 L248.5 533 Z" fill="#000" shape-rendering="auto"/>
<path d="M21 591.5 H58" stroke-dasharray="3 2"/>
<path d="M91 590.5 H124"/>
<path d="M253 589 L255 587 L257 589 L255 591 Z" shape-rendering="auto"/>
</g>
</svg>

<svg width="774" height="617" style="position:absolute;left:0;top:0" fill="#000"><clipPath id="c59740555"><rect x="8" y="109" width="63" height="63"/></clipPath><g clip-path="url(#c59740555)"><use href="#s9_6db2" x="10" y="160"/><use href="#s9_6db2" x="11" y="160" fill-opacity="0.4"/><use href="#s9_538b" x="20" y="160"/><use href="#s9_538b" x="21" y="160" fill-opacity="0.4"/><use href="#s9_6e90" x="30" y="160"/><use href="#s9_6e90" x="31" y="160" fill-opacity="0.4"/><use href="#s9_ff0c" x="40" y="160"/><use href="#s9_ff0c" x="41" y="160" fill-opacity="0.4"/><use href="#s9_7b80" x="50" y="160"/><use href="#s9_7b80" x="51" y="160" fill-opacity="0.4"/><use href="#s9_6613" x="60" y="160"/><use href="#s9_6613" x="61" y="160" fill-opacity="0.4"/></g></svg>
<svg width="774" height="617" style="position:absolute;left:0;top:0" fill="#000"><clipPath id="c128382"><rect x="76" y="109" width="63" height="63"/></clipPath><g clip-path="url(#c128382)"><use href="#s9_6db2" x="93" y="160"/><use href="#s9_6db2" x="94" y="160" fill-opacity="0.4"/><use href="#s9_538b" x="103" y="160"/><use href="#s9_538b" x="104" y="160" fill-opacity="0.4"/><use href="#s9_6e90" x="113" y="160"/><use href="#s9_6e90" x="114" y="160" fill-opacity="0.4"/></g></svg>
<svg width="774" height="617" style="position:absolute;left:0;top:0" fill="#000"><clipPath id="c545316"><rect x="144" y="109" width="63" height="63"/></clipPath><g clip-path="url(#c545316)"><use href="#s9_6cb9" x="166" y="160"/><use href="#s9_6cb9" x="167" y="160" fill-opacity="0.4"/><use href="#s9_7bb1" x="176" y="160"/><use href="#s9_7bb1" x="177" y="160" fill-opacity="0.4"/></g></svg>
<svg width="774" height="617" style="position:absolute;left:0;top:0" fill="#000"><clipPath id="c32083127"><rect x="8" y="177" width="63" height="63"/></clipPath><g clip-path="url(#c32083127)"><use href="#s9_8fc7" x="25" y="228"/><use href="#s9_8fc7" x="26" y="228" fill-opacity="0.4"/><use href="#s9_6ee4" x="35" y="228"/><use href="#s9_6ee4" x="36" y="228" fill-opacity="0.4"/><use href="#s9_5668" x="45" y="228"/><use href="#s9_5668" x="46" y="228" fill-opacity="0.4"/></g></svg>
<svg width="774" height="617" style="position:absolute;left:0;top:0" fill="#000"><clipPath id="c137695"><rect x="76" y="177" width="63" height="63"/></clipPath><g clip-path="url(#c137695)"><use href="#s9_68ad" x="98" y="228"/><use href="#s9_68ad" x="99" y="228" fill-opacity="0.4"/><use href="#s9_9600" x="108" y="228"/><use href="#s9_9600" x="109" y="228" fill-opacity="0.4"/></g></svg>
<svg width="774" height="617" style="position:absolute;left:0;top:0" fill="#000"><clipPath id="c34521780"><rect x="144" y="177" width="63" height="63"/></clipPath><g clip-path="url(#c34521780)"><use href="#s9_53cc" x="161" y="228"/><use href="#s9_53cc" x="162" y="228" fill-opacity="0.4"/><use href="#s9_538b" x="171" y="228"/><use href="#s9_538b" x="172" y="228" fill-opacity="0.4"/><use href="#s9_9600" x="181" y="228"/><use href="#s9_9600" x="182" y="228" fill-opacity="0.4"/></g></svg>
<svg width="774" height="617" style="position:absolute;left:0;top:0" fill="#000"><clipPath id="c60079521"><rect x="8" y="245" width="63" height="63"/></clipPath><g clip-path="url(#c60079521)"><use href="#s9_6e" x="13" y="296"/><use href="#s9_6e" x="14" y="296" fill-opacity="0.4"/><use href="#s9_4f4d" x="18" y="296"/><use href="#s9_4f4d" x="19" y="296" fill-opacity="0.4"/><use href="#s9_4e8c" x="28" y="296"/><use href="#s9_4e8c" x="29" y="296" fill-opacity="0.4"/><use href="#s9_901a" x="38" y="296"/><use href="#s9_901a" x="39" y="296" fill-opacity="0.4"/><use href="#s9_6362" x="48" y="296"/><use href="#s9_6362" x="49" y="296" fill-opacity="0.4"/><use href="#s9_53e3" x="58" y="296"/><use href="#s9_53e3" x="59" y="296" fill-opacity="0.4"/></g></svg>
<svg width="774" height="617" style="position:absolute;left:0;top:0" fill="#000"><clipPath id="c60675172"><rect x="76" y="245" width="63" height="63"/></clipPath><g clip-path="url(#c60675172)"><use href="#s9_6e" x="81" y="296"/><use href="#s9_6e" x="82" y="296" fill-opacity="0.4"/><use href="#s9_4f4d" x="86" y="296"/><use href="#s9_4f4d" x="87" y="296" fill-opacity="0.4"/><use href="#s9_4e09" x="96" y="296"/><use href="#s9_4e09" x="97" y="296" fill-opacity="0.4"/><use href="#s9_901a" x="106" y="296"/><use href="#s9_901a" x="107" y="296" fill-opacity="0.4"/><use href="#s9_6362" x="116" y="296"/><use href="#s9_6362" x="117" y="296" fill-opacity="0.4"/><use href="#s9_53e3" x="126" y="296"/><use href="#s9_53e3" x="127" y="296" fill-opacity="0.4"/></g></svg>
<svg width="774" height="617" style="position:absolute;left:0;top:0" fill="#000"><clipPath id="c36039320"><rect x="144" y="245" width="63" height="63"/></clipPath><g clip-path="url(#c36039320)"><use href="#s9_6e" x="149" y="296"/><use href="#s9_6e" x="150" y="296" fill-opacity="0.4"/><use href="#s9_4f4d" x="154" y="296"/><use href="#s9_4f4d" x="155" y="296" fill-opacity="0.4"/><use href="#s9_56db" x="164" y="296"/><use href="#s9_56db" x="165" y="296" fill-opacity="0.4"/><use href="#s9_901a" x="174" y="296"/><use href="#s9_901a" x="175" y="296" fill-opacity="0.4"/><use href="#s9_6362" x="184" y="296"/><use href="#s9_6362" x="185" y="296" fill-opacity="0.4"/><use href="#s9_53e3" x="194" y="296"/><use href="#s9_53e3" x="195" y="296" fill-opacity="0.4"/></g></svg>
<svg width="774" height="617" style="position:absolute;left:0;top:0" fill="#000"><clipPath id="c43964414"><rect x="8" y="313" width="63" height="63"/></clipPath><g clip-path="url(#c43964414)"><use href="#s9_53cc" x="20" y="364"/><use href="#s9_53cc" x="21" y="364" fill-opacity="0.4"/><use href="#s9_4f5c" x="30" y="364"/><use href="#s9_4f5c" x="31" y="364" fill-opacity="0.4"/><use href="#s9_7528" x="40" y="364"/><use href="#s9_7528" x="41" y="364" fill-opacity="0.4"/><use href="#s9_7f38" x="50" y="364"/><use href="#s9_7f38" x="51" y="364" fill-opacity="0.4"/></g></svg>
<svg width="774" height="617" style="position:absolute;left:0;top:0" fill="#000"><clipPath id="c84066698"><rect x="76" y="313" width="63" height="63"/></clipPath><g clip-path="url(#c84066698)"><use href="#s9_53cc" x="88" y="364"/><use href="#s9_53cc" x="89" y="364" fill-opacity="0.4"/><use href="#s9_4f5c" x="98" y="364"/><use href="#s9_4f5c" x="99" y="364" fill-opacity="0.4"/><use href="#s9_7528" x="108" y="364"/><use href="#s9_7528" x="109" y="364" fill-opacity="0.4"/><use href="#s9_7f38" x="118" y="364"/><use href="#s9_7f38" x="119" y="364" fill-opacity="0.4"/></g></svg>
<svg width="774" height="617" style="position:absolute;left:0;top:0" fill="#000"><clipPath id="c36829307"><rect x="144" y="313" width="63" height="63"/></clipPath><g clip-path="url(#c36829307)"><use href="#s9_5355" x="156" y="364"/><use href="#s9_5355" x="157" y="364" fill-opacity="0.4"/><use href="#s9_4f5c" x="166" y="364"/><use href="#s9_4f5c" x="167" y="364" fill-opacity="0.4"/><use href="#s9_7528" x="176" y="364"/><use href="#s9_7528" x="177" y="364" fill-opacity="0.4"/><use href="#s9_7f38" x="186" y="364"/><use href="#s9_7f38" x="187" y="364" fill-opacity="0.4"/></g></svg>
<svg width="774" height="617" style="position:absolute;left:0;top:0" fill="#000"><clipPath id="c86784065"><rect x="8" y="381" width="63" height="63"/></clipPath><g clip-path="url(#c86784065)"><use href="#s9_6807" x="30" y="432"/><use href="#s9_6807" x="31" y="432" fill-opacity="0.4"/><use href="#s9_5c3a" x="40" y="432"/><use href="#s9_5c3a" x="41" y="432" fill-opacity="0.4"/></g></svg>
<svg width="774" height="617" style="position:absolute;left:0;top:0" fill="#000"><clipPath id="c8332797"><rect x="76" y="381" width="63" height="63"/></clipPath><g clip-path="url(#c8332797)"><use href="#s9_72b6" x="93" y="432"/><use href="#s9_72b6" x="94" y="432" fill-opacity="0.4"/><use href="#s9_6001" x="103" y="432"/><use href="#s9_6001" x="104" y="432" fill-opacity="0.4"/><use href="#s9_56fe" x="113" y="432"/><use href="#s9_56fe" x="114" y="432" fill-opacity="0.4"/></g></svg>
<svg width="774" height="617" style="position:absolute;left:0;top:0" fill="#000"><clipPath id="c48927757"><rect x="144" y="381" width="63" height="63"/></clipPath><g clip-path="url(#c48927757)"><use href="#s9_5143" x="156" y="432"/><use href="#s9_5143" x="157" y="432" fill-opacity="0.4"/><use href="#s9_4ef6" x="166" y="432"/><use href="#s9_4ef6" x="167" y="432" fill-opacity="0.4"/><use href="#s9_5217" x="176" y="432"/><use href="#s9_5217" x="177" y="432" fill-opacity="0.4"/><use href="#s9_8868" x="186" y="432"/><use href="#s9_8868" x="187" y="432" fill-opacity="0.4"/></g></svg>
<svg width="774" height="617" style="position:absolute;left:0;top:0" fill="#000"><clipPath id="c38990961"><rect x="8" y="449" width="63" height="63"/></clipPath><g clip-path="url(#c38990961)"><use href="#s9_6cb9" x="20" y="500"/><use href="#s9_6cb9" x="21" y="500" fill-opacity="0.4"/><use href="#s9_8def" x="30" y="500"/><use href="#s9_8def" x="31" y="500" fill-opacity="0.4"/><use href="#s9_5f00" x="40" y="500"/><use href="#s9_5f00" x="41" y="500" fill-opacity="0.4"/><use href="#s9_5173" x="50" y="500"/><use href="#s9_5173" x="51" y="500" fill-opacity="0.4"/></g></svg>
<svg width="774" height="617" style="position:absolute;left:0;top:0" fill="#000"><clipPath id="c41348912"><rect x="76" y="449" width="63" height="63"/></clipPath><g clip-path="url(#c41348912)"><use href="#s9_5355" x="93" y="500"/><use href="#s9_5355" x="94" y="500" fill-opacity="0.4"/><use href="#s9_5411" x="103" y="500"/><use href="#s9_5411" x="104" y="500" fill-opacity="0.4"/><use href="#s9_9600" x="113" y="500"/><use href="#s9_9600" x="114" y="500" fill-opacity="0.4"/></g></svg>
<svg width="774" height="617" style="position:absolute;left:0;top:0" fill="#000"><clipPath id="c53109518"><rect x="144" y="449" width="63" height="63"/></clipPath><g clip-path="url(#c53109518)"><use href="#s9_6db2" x="151" y="500"/><use href="#s9_6db2" x="152" y="500" fill-opacity="0.4"/><use href="#s9_63a7" x="161" y="500"/><use href="#s9_63a7" x="162" y="500" fill-opacity="0.4"/><use href="#s9_5355" x="171" y="500"/><use href="#s9_5355" x="172" y="500" fill-opacity="0.4"/><use href="#s9_5411" x="181" y="500"/><use href="#s9_5411" x="182" y="500" fill-opacity="0.4"/><use href="#s9_9600" x="191" y="500"/><use href="#s9_9600" x="192" y="500" fill-opacity="0.4"/></g></svg>
<svg width="774" height="617" style="position:absolute;left:0;top:0" fill="#000"><clipPath id="c8054132"><rect x="8" y="517" width="63" height="63"/></clipPath><g clip-path="url(#c8054132)"><use href="#s9_5148" x="10" y="568"/><use href="#s9_5148" x="11" y="568" fill-opacity="0.4"/><use href="#s9_5bfc" x="20" y="568"/><use href="#s9_5bfc" x="21" y="568" fill-opacity="0.4"/><use href="#s9_5f0f" x="30" y="568"/><use href="#s9_5f0f" x="31" y="568" fill-opacity="0.4"/><use href="#s9_6ea2" x="40" y="568"/><use href="#s9_6ea2" x="41" y="568" fill-opacity="0.4"/><use href="#s9_6d41" x="50" y="568"/><use href="#s9_6d41" x="51" y="568" fill-opacity="0.4"/><use href="#s9_9600" x="60" y="568"/><use href="#s9_9600" x="61" y="568" fill-opacity="0.4"/></g></svg>
<svg width="774" height="617" style="position:absolute;left:0;top:0" fill="#000"><clipPath id="c404000"><rect x="76" y="517" width="63" height="63"/></clipPath><g clip-path="url(#c404000)"><use href="#s9_5378" x="93" y="568"/><use href="#s9_5378" x="94" y="568" fill-opacity="0.4"/><use href="#s9_8377" x="103" y="568"/><use href="#s9_8377" x="104" y="568" fill-opacity="0.4"/><use href="#s9_9600" x="113" y="568"/><use href="#s9_9600" x="114" y="568" fill-opacity="0.4"/></g></svg>
<svg width="774" height="617" style="position:absolute;left:0;top:0" fill="#000"><clipPath id="c27550304"><rect x="144" y="517" width="63" height="63"/></clipPath><g clip-path="url(#c27550304)"><use href="#s9_6ea2" x="151" y="568"/><use href="#s9_6ea2" x="152" y="568" fill-opacity="0.4"/><use href="#s9_6d41" x="161" y="568"/><use href="#s9_6d41" x="162" y="568" fill-opacity="0.4"/><use href="#s9_51cf" x="171" y="568"/><use href="#s9_51cf" x="172" y="568" fill-opacity="0.4"/><use href="#s9_538b" x="181" y="568"/><use href="#s9_538b" x="182" y="568" fill-opacity="0.4"/><use href="#s9_9600" x="191" y="568"/><use href="#s9_9600" x="192" y="568" fill-opacity="0.4"/></g></svg>
<svg width="774" height="617" style="position:absolute;left:0;top:0" fill="#000"><clipPath id="c16009646"><rect x="212" y="517" width="63" height="63"/></clipPath><g clip-path="url(#c16009646)"><use href="#s9_53ef" x="219" y="568"/><use href="#s9_53ef" x="220" y="568" fill-opacity="0.4"/><use href="#s9_8c03" x="229" y="568"/><use href="#s9_8c03" x="230" y="568" fill-opacity="0.4"/><use href="#s9_8282" x="239" y="568"/><use href="#s9_8282" x="240" y="568" fill-opacity="0.4"/><use href="#s9_6d41" x="249" y="568"/><use href="#s9_6d41" x="250" y="568" fill-opacity="0.4"/><use href="#s9_9600" x="259" y="568"/><use href="#s9_9600" x="260" y="568" fill-opacity="0.4"/></g></svg>
<div class="a" style="left:180px;top:104px;width:410px;height:407px;background:#6f80e2;border-radius:7px 7px 0 0"></div>
<div class="a" style="left:180px;top:104px;width:410px;height:29px;border-radius:7px 7px 0 0;background:linear-gradient(#7a98e4 0px,#a4b8f0 1px,#a4b8f0 2.5px,#94aee6 3.5px,#7c9de0 5px,#7b94df 7px,#7b96e0 15px,#80a6e7 22px,#80a8e8 25px,#7a98e0 26px,#6f80e2 27px,#6f80e2 29px)"></div>
<div class="a" style="left:180px;top:133px;width:3px;height:378px;background:linear-gradient(90deg,#6a7ee0,#8aa0ee)"></div>
<div class="a" style="left:587px;top:133px;width:3px;height:378px;background:linear-gradient(90deg,#7a86e2,#5e66d4)"></div>
<div class="a" style="left:180px;top:508px;width:410px;height:3px;background:linear-gradient(#7a86e2,#5e66d4)"></div>
<svg width="774" height="617" style="position:absolute;left:0;top:0" fill="#f4f6fc"><use href="#b13_6559" x="186" y="111"/><use href="#b13_5b66" x="200" y="111"/><use href="#b13_5f71" x="214" y="111"/><use href="#b13_7247" x="228" y="111"/></svg>
<div class="a" style="left:564px;top:110px;width:21px;height:21px;border:1px solid #b4c6f0;border-radius:3px;background:linear-gradient(160deg,#c88088 0%,#b86470 60%,#b05c6a 100%)"></div>
<svg width="774" height="617"><path d="M569.5 115.5L579.5 125.5M579.5 115.5L569.5 125.5" stroke="#fff" stroke-width="2.2"/></svg>
<div class="a" style="left:183px;top:133px;width:404px;height:375px;background:#ece9d8"></div>
<div class="a" style="left:194px;top:144px;width:383px;height:197px;background:#fff;border:1px solid;border-color:#aca899 #fff #fff #aca899"></div>
<div class="a" style="left:195px;top:145px;width:381px;height:195px;border:1px solid;border-color:#716f64 #f1efe2 #f1efe2 #716f64"></div>
<div class="a" style="left:196px;top:182px;width:379px;height:12px;background:#2f63c3"></div>
<svg width="774" height="617" style="position:absolute;left:0;top:0" fill="#000"><use href="#r12_5b" x="198" y="146"/><use href="#r12_31" x="204" y="146"/><use href="#r12_5d" x="210" y="146"/><use href="#r12_524d" x="222" y="146"/><use href="#r12_8a00" x="234" y="146"/></svg>
<svg width="774" height="617" style="position:absolute;left:0;top:0" fill="#000"><use href="#r12_5b" x="198" y="158"/><use href="#r12_32" x="204" y="158"/><use href="#r12_5d" x="210" y="158"/><use href="#r12_57fa" x="222" y="158"/><use href="#r12_7840" x="234" y="158"/><use href="#r12_ff1a" x="246" y="158"/><use href="#r12_5de5" x="258" y="158"/><use href="#r12_4f5c" x="270" y="158"/><use href="#r12_6cb9" x="282" y="158"/><use href="#r12_6db2" x="294" y="158"/></svg>
<svg width="774" height="617" style="position:absolute;left:0;top:0" fill="#000"><use href="#r12_5b" x="198" y="170"/><use href="#r12_33" x="204" y="170"/><use href="#r12_5d" x="210" y="170"/><use href="#r12_57fa" x="222" y="170"/><use href="#r12_7840" x="234" y="170"/><use href="#r12_ff1a" x="246" y="170"/><use href="#r12_538b" x="258" y="170"/><use href="#r12_529b" x="270" y="170"/><use href="#r12_548c" x="282" y="170"/><use href="#r12_6d41" x="294" y="170"/><use href="#r12_91cf" x="306" y="170"/></svg>
<svg width="774" height="617" style="position:absolute;left:0;top:0" fill="#fff"><use href="#r12_5b" x="198" y="182"/><use href="#r12_34" x="204" y="182"/><use href="#r12_5d" x="210" y="182"/><use href="#r12_57fa" x="222" y="182"/><use href="#r12_7840" x="234" y="182"/><use href="#r12_ff1a" x="246" y="182"/><use href="#r12_8f93" x="258" y="182"/><use href="#r12_51fa" x="270" y="182"/><use href="#r12_529b" x="282" y="182"/><use href="#r12_548c" x="294" y="182"/><use href="#r12_4f4d" x="306" y="182"/><use href="#r12_79fb" x="318" y="182"/><use href="#r12_4f20" x="330" y="182"/><use href="#r12_9012" x="342" y="182"/></svg>
<svg width="774" height="617" style="position:absolute;left:0;top:0" fill="#000"><use href="#r12_5b" x="198" y="194"/><use href="#r12_35" x="204" y="194"/><use href="#r12_5d" x="210" y="194"/><use href="#r12_57fa" x="222" y="194"/><use href="#r12_7840" x="234" y="194"/><use href="#r12_ff1a" x="246" y="194"/><use href="#r12_538b" x="258" y="194"/><use href="#r12_529b" x="270" y="194"/><use href="#r12_4f20" x="282" y="194"/><use href="#r12_9012" x="294" y="194"/></svg>
<svg width="774" height="617" style="position:absolute;left:0;top:0" fill="#000"><use href="#r12_5b" x="198" y="206"/><use href="#r12_36" x="204" y="206"/><use href="#r12_5d" x="210" y="206"/><use href="#r12_57fa" x="222" y="206"/><use href="#r12_7840" x="234" y="206"/><use href="#r12_ff1a" x="246" y="206"/><use href="#r12_6d41" x="258" y="206"/><use href="#r12_52a8" x="270" y="206"/><use href="#r12_72b6" x="282" y="206"/><use href="#r12_6001" x="294" y="206"/></svg>
<svg width="774" height="617" style="position:absolute;left:0;top:0" fill="#000"><use href="#r12_5b" x="198" y="218"/><use href="#r12_37" x="204" y="218"/><use href="#r12_5d" x="210" y="218"/><use href="#r12_6db2" x="222" y="218"/><use href="#r12_538b" x="234" y="218"/><use href="#r12_7cfb" x="246" y="218"/><use href="#r12_7edf" x="258" y="218"/><use href="#r12_7ed3" x="270" y="218"/><use href="#r12_6784" x="282" y="218"/></svg>
<svg width="774" height="617" style="position:absolute;left:0;top:0" fill="#000"><use href="#r12_5b" x="198" y="230"/><use href="#r12_38" x="204" y="230"/><use href="#r12_5d" x="210" y="230"/><use href="#r12_6db2" x="222" y="230"/><use href="#r12_538b" x="234" y="230"/><use href="#r12_6e90" x="246" y="230"/><use href="#r12_90e8" x="258" y="230"/><use href="#r12_5206" x="270" y="230"/></svg>
<svg width="774" height="617" style="position:absolute;left:0;top:0" fill="#000"><use href="#r12_5b" x="198" y="242"/><use href="#r12_39" x="204" y="242"/><use href="#r12_5d" x="210" y="242"/><use href="#r12_6db2" x="222" y="242"/><use href="#r12_538b" x="234" y="242"/><use href="#r12_7f38" x="246" y="242"/><use href="#r12_548c" x="258" y="242"/><use href="#r12_6db2" x="270" y="242"/><use href="#r12_538b" x="282" y="242"/><use href="#r12_9a6c" x="294" y="242"/><use href="#r12_8fbe" x="306" y="242"/></svg>
<svg width="774" height="617" style="position:absolute;left:0;top:0" fill="#000"><use href="#r12_5b" x="198" y="254"/><use href="#r12_31" x="204" y="254"/><use href="#r12_30" x="210" y="254"/><use href="#r12_5d" x="216" y="254"/><use href="#r12_63a7" x="228" y="254"/><use href="#r12_5236" x="240" y="254"/><use href="#r12_9600" x="252" y="254"/><use href="#r12_57fa" x="264" y="254"/><use href="#r12_7840" x="276" y="254"/></svg>
<svg width="774" height="617" style="position:absolute;left:0;top:0" fill="#000"><use href="#r12_5b" x="198" y="266"/><use href="#r12_31" x="204" y="266"/><use href="#r12_31" x="210" y="266"/><use href="#r12_5d" x="216" y="266"/><use href="#r12_63a7" x="228" y="266"/><use href="#r12_5236" x="240" y="266"/><use href="#r12_9600" x="252" y="266"/><use href="#r12_ff1a" x="264" y="266"/><use href="#r12_6362" x="276" y="266"/><use href="#r12_5411" x="288" y="266"/><use href="#r12_9600" x="300" y="266"/></svg>
<svg width="774" height="617" style="position:absolute;left:0;top:0" fill="#000"><use href="#r12_5b" x="198" y="278"/><use href="#r12_31" x="204" y="278"/><use href="#r12_32" x="210" y="278"/><use href="#r12_5d" x="216" y="278"/><use href="#r12_63a7" x="228" y="278"/><use href="#r12_5236" x="240" y="278"/><use href="#r12_9600" x="252" y="278"/><use href="#r12_ff1a" x="264" y="278"/><use href="#r12_5f00" x="276" y="278"/><use href="#r12_5173" x="288" y="278"/><use href="#r12_9600" x="300" y="278"/></svg>
<svg width="774" height="617" style="position:absolute;left:0;top:0" fill="#000"><use href="#r12_5b" x="198" y="290"/><use href="#r12_31" x="204" y="290"/><use href="#r12_33" x="210" y="290"/><use href="#r12_5d" x="216" y="290"/><use href="#r12_63a7" x="228" y="290"/><use href="#r12_5236" x="240" y="290"/><use href="#r12_9600" x="252" y="290"/><use href="#r12_ff1a" x="264" y="290"/><use href="#r12_538b" x="276" y="290"/><use href="#r12_529b" x="288" y="290"/><use href="#r12_63a7" x="300" y="290"/><use href="#r12_5236" x="312" y="290"/><use href="#r12_9600" x="324" y="290"/></svg>
<svg width="774" height="617" style="position:absolute;left:0;top:0" fill="#000"><use href="#r12_5b" x="198" y="302"/><use href="#r12_31" x="204" y="302"/><use href="#r12_34" x="210" y="302"/><use href="#r12_5d" x="216" y="302"/><use href="#r12_63a7" x="228" y="302"/><use href="#r12_5236" x="240" y="302"/><use href="#r12_9600" x="252" y="302"/><use href="#r12_ff1a" x="264" y="302"/><use href="#r12_6d41" x="276" y="302"/><use href="#r12_91cf" x="288" y="302"/><use href="#r12_63a7" x="300" y="302"/><use href="#r12_5236" x="312" y="302"/><use href="#r12_9600" x="324" y="302"/></svg>
<svg width="774" height="617" style="position:absolute;left:0;top:0" fill="#000"><use href="#r12_5b" x="198" y="314"/><use href="#r12_31" x="204" y="314"/><use href="#r12_35" x="210" y="314"/><use href="#r12_5d" x="216" y="314"/><use href="#r12_6db2" x="228" y="314"/><use href="#r12_538b" x="240" y="314"/><use href="#r12_7cfb" x="252" y="314"/><use href="#r12_7edf" x="264" y="314"/><use href="#r12_7684" x="276" y="314"/><use href="#r12_56de" x="288" y="314"/><use href="#r12_8def" x="300" y="314"/><use href="#r12_56fe" x="312" y="314"/><use href="#r12_8868" x="324" y="314"/><use href="#r12_793a" x="336" y="314"/></svg>
<div class="a" style="left:218px;top:348px;width:165px;height:115px;border:1px solid;border-color:#aca899 #fff #fff #aca899"></div>
<div class="a" style="left:219px;top:349px;width:163px;height:113px;border:1px solid;border-color:#716f64 #f1efe2 #f1efe2 #716f64"></div>
<svg width="774" height="617">
<defs>
<linearGradient id="cyl" x1="0" x2="1" y1="0" y2="0">
<stop offset="0" stop-color="#b8b4a8"/><stop offset="0.15" stop-color="#d0ccc0"/><stop offset="0.3" stop-color="#6a675f"/><stop offset="0.55" stop-color="#8a867c"/><stop offset="0.75" stop-color="#5e5b54"/><stop offset="0.9" stop-color="#c0bcb0"/><stop offset="1" stop-color="#8a867c"/>
</linearGradient>
<linearGradient id="cyld" x1="0" x2="1" y1="0" y2="0">
<stop offset="0" stop-color="#8a867c"/><stop offset="0.2" stop-color="#6a665e"/><stop offset="0.5" stop-color="#2a2824"/><stop offset="0.8" stop-color="#6a665e"/><stop offset="1" stop-color="#8a867c"/>
</linearGradient>
<radialGradient id="bgv" cx="0.5" cy="0.45" r="0.7"><stop offset="0" stop-color="#1c1d19"/><stop offset="1" stop-color="#151613"/></radialGradient>
<filter id="soft" x="0" y="0" width="1" height="1"><feGaussianBlur stdDeviation="0.6"/></filter>
<clipPath id="vclip"><rect x="221" y="351" width="160" height="110"/></clipPath>
</defs>
<rect x="221" y="351" width="160" height="110" fill="url(#bgv)"/>
<g clip-path="url(#vclip)"><g filter="url(#soft)">
<!-- hand -->
<path d="M258 349 L266 350 Q270 353 271 358 L273 362 L269 362 Q266 356 259 352 Z" fill="#d0a078"/>
<path d="M268 349 L286 349 Q289 353 287.5 361 L284 361 L283 356 L275 356 L272 359 Z" fill="#c09068"/>
<path d="M279 351 Q285 352 286.5 359" stroke="#e8c098" stroke-width="1.2" fill="none"/>
<rect x="270" y="358" width="16" height="9" fill="#7a7670"/>
<rect x="270" y="358" width="16" height="1.5" fill="#8e8a84"/>
<rect x="271" y="366" width="14" height="1.5" fill="#b8b2a8"/>
<!-- left cylinder -->
<rect x="274" y="370" width="10" height="3" fill="#b0aca0"/>
<rect x="275" y="373" width="8" height="50" fill="url(#cyl)"/>
<rect x="274.5" y="392" width="9" height="2" fill="#9a968a"/>
<rect x="275" y="423" width="8" height="13" fill="url(#cyld)"/>
<rect x="275.5" y="435" width="7" height="2" fill="#c8c4b8"/>
<rect x="277" y="437" width="4" height="6" fill="#2e2c28"/>
<rect x="272.5" y="443" width="13.5" height="4.5" fill="#d0ccc4"/>
<path d="M279 447.5 Q279 457 284 462" stroke="#2a3c7a" stroke-width="3" fill="none"/>
<!-- right cylinder -->
<rect x="306" y="369.5" width="11" height="3" fill="#b0aca0"/>
<path d="M307.5 372 L315.5 372 L313 379 L310 379 Z" fill="#c8c4b8"/>
<rect x="307.5" y="373" width="8.5" height="52" fill="url(#cyl)"/>
<rect x="306.5" y="393" width="10" height="2" fill="#9a968a"/>
<rect x="307.5" y="425" width="8.5" height="11" fill="url(#cyld)"/>
<rect x="308" y="435" width="8" height="2" fill="#c8c4b8"/>
<rect x="310" y="437" width="4" height="6" fill="#2e2c28"/>
<rect x="304.5" y="443" width="11.5" height="4.5" fill="#c8c0b8"/>
<rect x="313" y="443" width="3" height="4.5" fill="#a84430"/>
<path d="M310.5 447.5 Q310.5 457 304 462" stroke="#2a3c7a" stroke-width="3" fill="none"/>
<!-- middle -->
<rect x="290.5" y="394" width="8.5" height="12.5" fill="#9a968a"/>
<rect x="291.5" y="394.5" width="6.5" height="3" fill="#b8b4a8"/>
<rect x="291" y="400" width="7.5" height="2" fill="#4a4640"/>
<rect x="298" y="395.5" width="10" height="3.5" fill="#8a867c"/>
<rect x="284" y="397" width="6.5" height="3" fill="#4a4840"/>
<rect x="294.5" y="406" width="3" height="56" fill="#a09c90"/>
<rect x="296.5" y="406" width="1" height="56" fill="#5a564e"/>
</g></g>
</svg>

<div class="a" style="left:402px;top:430px;width:12px;height:12px;background:#fff;border:1px solid;border-color:#808080 #fff #fff #808080;box-shadow:inset 1px 1px 0 #404040"></div>
<svg width="774" height="617"><path d="M404.5 435.5 L407 438.5 L411.5 432.5" stroke="#000" stroke-width="2" fill="none"/></svg>
<svg width="774" height="617" style="position:absolute;left:0;top:0" fill="#000"><use href="#r12_9884" x="419" y="430"/><use href="#r12_89c8" x="431" y="430"/></svg>
<div class="btn" style="left:258px;top:477px"></div>
<svg width="774" height="617" style="position:absolute;left:0;top:0" fill="#000"><use href="#r12_786e" x="283" y="480"/><use href="#r12_786e" x="284" y="480" fill-opacity="0.55"/><use href="#r12_5b9a" x="295" y="480"/><use href="#r12_5b9a" x="296" y="480" fill-opacity="0.55"/></svg>
<div class="btn" style="left:348px;top:477px"></div>
<svg width="774" height="617" style="position:absolute;left:0;top:0" fill="#000"><use href="#r12_53d6" x="373" y="480"/><use href="#r12_53d6" x="374" y="480" fill-opacity="0.55"/><use href="#r12_6d88" x="385" y="480"/><use href="#r12_6d88" x="386" y="480" fill-opacity="0.55"/></svg>
<div class="btn" style="left:438px;top:477px"></div>
<svg width="774" height="617" style="position:absolute;left:0;top:0" fill="#000"><use href="#r12_5e2e" x="463" y="480"/><use href="#r12_5e2e" x="464" y="480" fill-opacity="0.55"/><use href="#r12_52a9" x="475" y="480"/><use href="#r12_52a9" x="476" y="480" fill-opacity="0.55"/></svg>
<div class="a" style="left:0;top:593px;width:774px;height:21px;background:#ece9d8;border-top:1px solid #f8f8f0"></div>
<div class="a" style="left:0;top:614px;width:774px;height:3px;background:linear-gradient(#8090e8,#6a7ee0)"></div>
<svg width="774" height="617" style="position:absolute;left:0;top:0" fill="#000"><use href="#r12_64ad" x="-1" y="598"/><use href="#r12_653e" x="11" y="598"/><use href="#r12_6559" x="23" y="598"/><use href="#r12_5b66" x="35" y="598"/><use href="#r12_5f71" x="47" y="598"/><use href="#r12_7247" x="59" y="598"/></svg>
<div class="a" style="left:677px;top:597px;width:77px;height:16px;border:1px solid;border-color:#aca899 #fff #fff #aca899"></div>
<svg width="774" height="617" style="position:absolute;left:0;top:0" fill="#000"><use href="#r12_39" x="694" y="598"/><use href="#r12_39" x="700" y="598"/><use href="#r12_6587" x="712" y="598"/><use href="#r12_6863" x="724" y="598"/></svg>
<svg width="774" height="617"><path d="M772 602 L762 612 M772 606 L766 612 M772 610 L770 612" stroke="#aca899" stroke-width="1.2"/><path d="M773 603 L763 613 M773 607 L767 613" stroke="#fff" stroke-width="1"/></svg>
</body></html>
